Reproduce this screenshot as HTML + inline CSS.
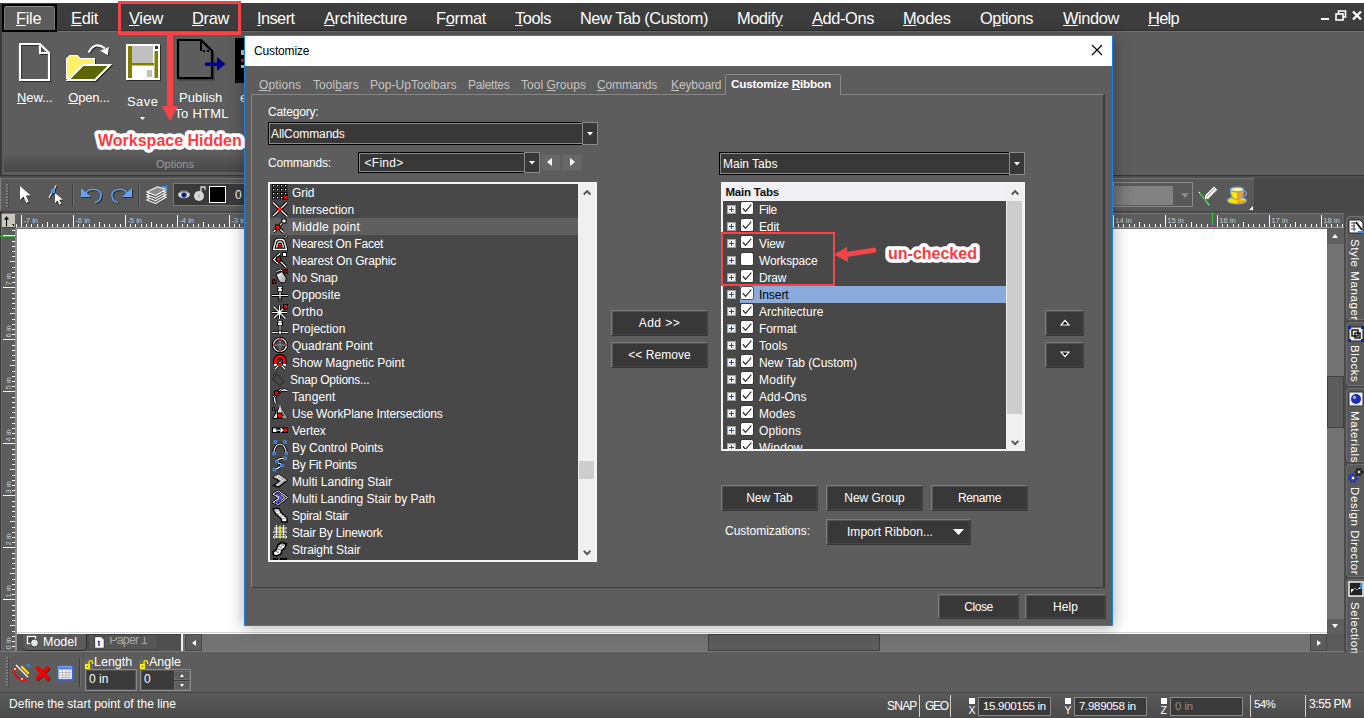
<!DOCTYPE html><html><head><meta charset="utf-8"><title>Customize</title><style>
*{box-sizing:border-box;margin:0;padding:0}
html,body{width:1364px;height:718px;overflow:hidden}
body{position:relative;background:#484848;font-family:"Liberation Sans",sans-serif;color:#fff;font-size:12px}
.a{position:absolute}
.t{position:absolute;white-space:pre;line-height:1}
u{text-decoration:underline;text-underline-offset:1px}
.btn{position:absolute;background:#383838;border:1px solid #707070;box-shadow:inset 0 0 0 1px #444;color:#fff;text-align:center;white-space:pre}
.d{font-size:11.6px}
</style></head><body>
<div class="a" style="left:0px;top:0px;width:1364px;height:3px;background:#fff;"></div>
<div class="a" style="left:0px;top:3px;width:1364px;height:27px;background:#3d3d3d;"></div>
<div class="a" style="left:0px;top:3px;width:2px;height:715px;background:#3a3a3a;"></div>
<div class="a" style="left:1321px;top:18px;width:8px;height:2px;background:#fff;"></div>
<svg class="a" style="left:1335px;top:10px" width="12" height="11" viewBox="0 0 12 11"><path d="M3.5 3.5V1h7v6H8" fill="none" stroke="#fff" stroke-width="1.6"/><rect x="1" y="4" width="7" height="6" fill="none" stroke="#fff" stroke-width="1.6"/></svg>
<svg class="a" style="left:1352px;top:10px" width="10" height="11" viewBox="0 0 10 11"><path d="M1 1.5l8 8M9 1.5l-8 8" stroke="#fff" stroke-width="2.4"/></svg>
<div class="a" style="left:2px;top:30px;width:1362px;height:146px;background:#5d5d5d;border-top:1px solid #2f2f2f;border-bottom:1px solid #363636"></div>
<div class="a" style="left:0px;top:176px;width:1364px;height:2px;background:#4e4e4e;"></div>
<div class="a" style="left:2px;top:31px;width:1362px;height:1px;background:#707070;"></div>
<div class="a" style="left:2px;top:4px;width:55px;height:27.5px;background:#000;"></div>
<div class="a" style="left:4px;top:6px;width:51px;height:23.5px;background:#5c5c5c;border:1px solid;border-color:#8c8c8c #7c7c7c #5c5c5c #7c7c7c;border-radius:3px 3px 0 0"></div>
<div class="t " style="left:16px;top:10.12px;font-size:16.4px;color:#fff;letter-spacing:-0.282px;"><u>F</u>ile</div>
<div class="t " style="left:71px;top:10.12px;font-size:16.4px;color:#fff;letter-spacing:-0.315px;"><u>E</u>dit</div>
<div class="t " style="left:129px;top:10.12px;font-size:16.4px;color:#fff;letter-spacing:-0.313px;"><u>V</u>iew</div>
<div class="t " style="left:192px;top:10.12px;font-size:16.4px;color:#fff;letter-spacing:-0.318px;"><u>D</u>raw</div>
<div class="t " style="left:257px;top:10.12px;font-size:16.4px;color:#fff;letter-spacing:-0.586px;"><u>I</u>nsert</div>
<div class="t " style="left:324px;top:10.12px;font-size:16.4px;color:#fff;letter-spacing:-0.375px;"><u>A</u>rchitecture</div>
<div class="t " style="left:436px;top:10.12px;font-size:16.4px;color:#fff;letter-spacing:-0.323px;">F<u>o</u>rmat</div>
<div class="t " style="left:515px;top:10.12px;font-size:16.4px;color:#fff;letter-spacing:-0.457px;"><u>T</u>ools</div>
<div class="t " style="left:580px;top:10.12px;font-size:16.4px;color:#fff;letter-spacing:-0.469px;">New Tab (Custom)</div>
<div class="t " style="left:737px;top:10.12px;font-size:16.4px;color:#fff;letter-spacing:-0.467px;">Modif<u>y</u></div>
<div class="t " style="left:812px;top:10.12px;font-size:16.4px;color:#fff;letter-spacing:-0.389px;"><u>A</u>dd-Ons</div>
<div class="t " style="left:903px;top:10.12px;font-size:16.4px;color:#fff;letter-spacing:-0.325px;"><u>M</u>odes</div>
<div class="t " style="left:980px;top:10.12px;font-size:16.4px;color:#fff;letter-spacing:-0.503px;">O<u>p</u>tions</div>
<div class="t " style="left:1063px;top:10.12px;font-size:16.4px;color:#fff;letter-spacing:-0.388px;"><u>W</u>indow</div>
<div class="t " style="left:1148px;top:10.12px;font-size:16.4px;color:#fff;letter-spacing:-0.683px;"><u>H</u>elp</div>
<div class="a" style="left:4px;top:156px;width:240px;height:16px;background:linear-gradient(#585858,#484848);"></div>
<div class="t " style="left:156px;top:159.29px;font-size:11px;color:#9b9b9b;">Options</div>
<div class="t " style="left:17px;top:91.00px;font-size:13px;color:#fff;letter-spacing:-0.104px;"><u>N</u>ew...</div>
<div class="t " style="left:68.3px;top:91.00px;font-size:13px;color:#fff;letter-spacing:-0.191px;"><u>O</u>pen...</div>
<div class="t " style="left:127px;top:94.50px;font-size:13px;color:#fff;letter-spacing:0.417px;">Save</div>
<div class="t " style="left:179px;top:91.00px;font-size:13px;color:#fff;letter-spacing:0.094px;">Publish</div>
<div class="t " style="left:174.4px;top:107.00px;font-size:13px;color:#fff;letter-spacing:0.224px;">To HTML</div>
<div class="t " style="left:240px;top:91.00px;font-size:13px;color:#fff;">e</div>
<svg class="a" style="left:140px;top:116.500px" width="5" height="3"><path d="M0 0h5L2.500 3z" fill="#fff"/></svg>
<div class="a" style="left:0px;top:178px;width:1254px;height:33px;background:#595959;border-top:1px solid #747474;border-left:1px solid #808080"></div>
<div class="a" style="left:17px;top:229px;width:1310px;height:405px;background:#fff;"></div>
<div class="a" style="left:17px;top:632px;width:1310px;height:1px;background:#d4d4d4;"></div>
<div class="a" style="left:1327px;top:228px;width:17px;height:406px;background:#737373;"></div>
<div class="a" style="left:1344px;top:214px;width:20px;height:438px;background:#4a4a4a;"></div>
<div class="a" style="left:2px;top:634px;width:1342px;height:17px;background:#737373;"></div>
<div class="a" style="left:0px;top:651px;width:1364px;height:1px;background:#7a7a7a;"></div>
<div class="a" style="left:0px;top:652px;width:1364px;height:40px;background:#5d5d5d;"></div>
<div class="a" style="left:0px;top:692px;width:1364px;height:26px;background:linear-gradient(#5a5a5a,#4a4a4a);border-top:1px solid #464646"></div>
<div class="t " style="left:9px;top:698.24px;font-size:12px;color:#fff;letter-spacing:0.026px;">Define the start point of the line</div>
<svg class="a" style="left:17px;top:41px;filter:drop-shadow(1px 1px 0.6px rgba(0,0,0,.55))" width="38" height="44" viewBox="0 0 38 44"><path d="M3 3h20l9 9v27H3z" fill="none" stroke="#fff" stroke-width="2.2"/><path d="M23 3v9h9" fill="none" stroke="#fff" stroke-width="2.2"/></svg>
<svg class="a" style="left:64px;top:40px;filter:drop-shadow(1px 1px 0.6px rgba(0,0,0,.55))" width="50" height="44" viewBox="0 0 50 44"><path d="M24.500 12.600Q31 .500 41 8.500" fill="none" stroke="#fff" stroke-width="2.200"/><path d="M36.200 10.700L45 7L43.700 15.300z" fill="#fff"/>
<path d="M3 39V19l3-3h7l3 3h14v7" fill="#fff066" stroke="#fff" stroke-width="2"/><path d="M3 39V19l3-3h7l3 3h14v6H19z" fill="#fff066"/>
<path d="M4 40l15-15h27L31 40z" fill="#5c6600" stroke="#fff" stroke-width="2"/></svg>
<svg class="a" style="left:124px;top:42px;filter:drop-shadow(1px 1px 0.6px rgba(0,0,0,.55))" width="40" height="42" viewBox="0 0 40 42"><path d="M2 2h34v36H2z" fill="#fff"/><rect x="4" y="4" width="4" height="32" fill="#7f7f00"/><rect x="30.500" y="9" width="3.500" height="27" fill="#7f7f00"/>
<rect x="8" y="4" width="21" height="17" fill="#c0c0c0"/><rect x="8" y="21" width="22" height="2.500" fill="#7f7f00"/>
<rect x="8" y="24" width="22" height="10" fill="#fff"/><rect x="23" y="28" width="5" height="7" fill="#c0c0c0"/><rect x="31" y="4" width="3" height="3" fill="#333"/></svg>
<svg class="a" style="left:175px;top:37px;" width="54" height="50" viewBox="0 0 54 50"><path d="M4.500 4.500h23l11 11v27h-34z" fill="none" stroke="#3a3a3a" stroke-width="2"/><path d="M3 3h23l11 11v27H3z" fill="#5d5d5d" stroke="#000" stroke-width="2.200"/><path d="M26 3v11h11" fill="none" stroke="#000" stroke-width="2" stroke-dasharray="11 2 2 2 2 2 2 2"/>
<rect x="30" y="25.500" width="14" height="3.400" fill="#00008b"/><path d="M42 20l8.500 7-8.500 7z" fill="#00008b"/></svg>
<div class="a" style="left:235px;top:38px;width:9px;height:45px;background:#000;"></div>
<div class="a" style="left:241px;top:50px;width:3px;height:5px;background:#c0c0c0;"></div>
<div class="a" style="left:241px;top:59px;width:3px;height:3px;background:#f00;"></div>
<div class="a" style="left:241px;top:65px;width:3px;height:3px;background:#c0c0c0;"></div>
<div class="a" style="left:6px;top:184px;width:2px;height:2px;background:#808080;box-shadow:1px 1px 0 #444"></div>
<div class="a" style="left:6px;top:187px;width:2px;height:2px;background:#808080;box-shadow:1px 1px 0 #444"></div>
<div class="a" style="left:6px;top:190px;width:2px;height:2px;background:#808080;box-shadow:1px 1px 0 #444"></div>
<div class="a" style="left:6px;top:193px;width:2px;height:2px;background:#808080;box-shadow:1px 1px 0 #444"></div>
<div class="a" style="left:6px;top:196px;width:2px;height:2px;background:#808080;box-shadow:1px 1px 0 #444"></div>
<div class="a" style="left:6px;top:199px;width:2px;height:2px;background:#808080;box-shadow:1px 1px 0 #444"></div>
<div class="a" style="left:6px;top:202px;width:2px;height:2px;background:#808080;box-shadow:1px 1px 0 #444"></div>
<div class="a" style="left:6px;top:205px;width:2px;height:2px;background:#808080;box-shadow:1px 1px 0 #444"></div>
<svg class="a" style="left:17px;top:184px;filter:drop-shadow(1px 1px 0.6px rgba(0,0,0,.55))" width="16" height="22" viewBox="0 0 16 22"><path d="M3 2v14l3.600-3.600 2.800 6.400 2.300-1-2.800-6.300h4.800z" fill="#fff"/></svg>
<svg class="a" style="left:46px;top:184px;filter:drop-shadow(1px 1px 0.6px rgba(0,0,0,.55))" width="18" height="22" viewBox="0 0 18 22"><path d="M10 1C9 6 5 8 3 14" fill="none" stroke="#ddd" stroke-width="1.200"/><rect x="5" y="5" width="4" height="4" fill="#4d94f5"/><path d="M9 9v10l2.500-2.500 2 4 1.800-.800-2-4h3.500z" fill="#fff"/></svg>
<div class="a" style="left:72px;top:184px;width:1px;height:23px;background:#3e3e3e;"></div>
<div class="a" style="left:73px;top:184px;width:1px;height:23px;background:#6c6c6c;"></div>
<svg class="a" style="left:79px;top:185px;filter:drop-shadow(1px 1px 0.6px rgba(0,0,0,.55))" width="26" height="20" viewBox="0 0 26 20"><path d="M2 3v9h10z" fill="#66a3f7"/><path d="M7 8c4-6 16-4 15 3-.500 4-3 6-6 6.500" fill="none" stroke="#66a3f7" stroke-width="1.400"/></svg>
<svg class="a" style="left:108px;top:185px;filter:drop-shadow(1px 1px 0.6px rgba(0,0,0,.55))" width="26" height="20" viewBox="0 0 26 20"><path d="M24 3v9h-10z" fill="#66a3f7"/><path d="M19 8c-4-6-16-4-15 3 .500 4 3 6 6 6.500" fill="none" stroke="#66a3f7" stroke-width="1.400"/></svg>
<div class="a" style="left:138px;top:184px;width:1px;height:23px;background:#3e3e3e;"></div>
<div class="a" style="left:139px;top:184px;width:1px;height:23px;background:#6c6c6c;"></div>
<svg class="a" style="left:145px;top:184.5px;" width="23" height="21" viewBox="0 0 26 24"><path d="M2 17l12-6 10 3-12 7z" fill="#5d5d5d" stroke="#fff" stroke-width="1.200"/><path d="M2 14l12-6 10 3-12 7z" fill="#5d5d5d" stroke="#fff" stroke-width="1.200"/><path d="M2 11l12-6 10 3-12 7z" fill="#5d5d5d" stroke="#fff" stroke-width="1.200"/>
<path d="M2 8l12-6 10 3-12 7z" fill="#8a8a8a" stroke="#fff" stroke-width="1.200"/><path d="M19 2h5v6" fill="none" stroke="#4d94f5" stroke-width="2"/></svg>
<div class="a" style="left:173px;top:183px;width:80px;height:23px;background:#3a3a3a;border:1px solid #7a7a7a"></div>
<svg class="a" style="left:176.5px;top:189px;" width="14" height="12" viewBox="0 0 16 14"><path d="M1 7c3-5 11-5 14 0-3 5-11 5-14 0z" fill="#e8e8e8"/><circle cx="8" cy="7" r="3.200" fill="#1c3f9e"/><circle cx="8" cy="7" r="1.400" fill="#0a1030"/><path d="M1 6c3-5 11-5 14 0" fill="none" stroke="#bbb" stroke-width="1"/></svg>
<svg class="a" style="left:193px;top:185px;" width="14" height="18" viewBox="0 0 14 18"><circle cx="6" cy="11" r="5" fill="#d9d9d9"/><path d="M8 7V2h4v3" fill="none" stroke="#d9d9d9" stroke-width="1.300"/><rect x="5" y="9" width="2" height="4" fill="#bbb"/></svg>
<div class="a" style="left:209px;top:186px;width:17px;height:17px;background:#000;border:1px solid #fff"></div>
<div class="t " style="left:235px;top:188.84px;font-size:12px;color:#fff;">0</div>
<div class="a" style="left:1113px;top:182px;width:80px;height:25px;background:#595959;border:1px solid #8a8a8a"></div>
<div class="a" style="left:1113px;top:186px;width:60px;height:19px;background:linear-gradient(90deg,#747474,#828282 40%);"></div>
<svg class="a" style="left:1181px;top:193px" width="8" height="5"><path d="M0 0h8L4 5z" fill="#8a8a8a"/></svg>
<svg class="a" style="left:1198px;top:184px;" width="22" height="22" viewBox="0 0 22 22"><path d="M1 8l10 13" stroke="#fff" stroke-width="1.200"/><path d="M2 9l9 11" stroke="#18c018" stroke-width="1.400"/><path d="M7 11l9-9 4 4-9 9-5 1z" fill="#f4f4f4" stroke="#555" stroke-width=".800"/><path d="M9 12l8-8M11 14l8-8" stroke="#777" stroke-width=".800"/></svg>
<svg class="a" style="left:1227px;top:185px;" width="23" height="20" viewBox="0 0 23 20"><ellipse cx="10" cy="15.500" rx="9.500" ry="3.500" fill="#ffe000" stroke="#6fa0f0" stroke-width="1.200"/><path d="M10 19a9.500 3.500 0 0 0 9.500-3.500H10z" fill="#e8a030"/>
<path d="M3.500 5c0 6 2 9.500 6.500 9.500S16.500 11 16.500 5z" fill="#ffe800" stroke="#6fa0f0" stroke-width="1.200"/><path d="M10 14.500c4.500 0 6.500-3.500 6.500-9.500H10z" fill="#e8a030"/>
<ellipse cx="10" cy="4.500" rx="6.500" ry="2.300" fill="#fff6a0" stroke="#6fa0f0" stroke-width="1.200"/><path d="M16.500 6.500c4-1 4 4-1 5" fill="none" stroke="#6fa0f0" stroke-width="1.400"/></svg>
<svg class="a" style="left:1249px;top:206px" width="4" height="4"><path d="M4 0v4H0z" fill="#fff"/></svg>
<div class="a" style="left:2px;top:213px;width:1342px;height:1px;background:#767676;"></div>
<div class="a" style="left:2px;top:214px;width:1342px;height:13px;background:#5d5d5d;"></div>
<div class="a" style="left:16px;top:227px;width:1328px;height:1px;background:#9a9a9a;"></div>
<div class="a" style="left:16px;top:228px;width:1328px;height:1px;background:#6e6e6e;"></div>
<svg class="a" style="left:0;top:214px" width="1344" height="14" viewBox="0 0 1344 14"><rect x="16" y="10" width="1" height="3" fill="#fff"/><rect x="21" y="1" width="1" height="12" fill="#fff"/><text x="23.2" y="8.900" font-size="7.700" fill="#c4ccd4" font-family="Liberation Sans">-7 in</text><rect x="26" y="10" width="1" height="3" fill="#fff"/><rect x="31" y="10" width="1" height="3" fill="#fff"/><rect x="37" y="10" width="1" height="3" fill="#fff"/><rect x="42" y="10" width="1" height="3" fill="#fff"/><rect x="47" y="8" width="1" height="5" fill="#fff"/><rect x="52" y="10" width="1" height="3" fill="#fff"/><rect x="57" y="10" width="1" height="3" fill="#fff"/><rect x="63" y="10" width="1" height="3" fill="#fff"/><rect x="68" y="10" width="1" height="3" fill="#fff"/><rect x="73" y="1" width="1" height="12" fill="#fff"/><text x="75.2" y="8.900" font-size="7.700" fill="#c4ccd4" font-family="Liberation Sans">-6 in</text><rect x="78" y="10" width="1" height="3" fill="#fff"/><rect x="83" y="10" width="1" height="3" fill="#fff"/><rect x="89" y="10" width="1" height="3" fill="#fff"/><rect x="94" y="10" width="1" height="3" fill="#fff"/><rect x="99" y="8" width="1" height="5" fill="#fff"/><rect x="104" y="10" width="1" height="3" fill="#fff"/><rect x="109" y="10" width="1" height="3" fill="#fff"/><rect x="115" y="10" width="1" height="3" fill="#fff"/><rect x="120" y="10" width="1" height="3" fill="#fff"/><rect x="125" y="1" width="1" height="12" fill="#fff"/><text x="127.2" y="8.900" font-size="7.700" fill="#c4ccd4" font-family="Liberation Sans">-5 in</text><rect x="130" y="10" width="1" height="3" fill="#fff"/><rect x="135" y="10" width="1" height="3" fill="#fff"/><rect x="141" y="10" width="1" height="3" fill="#fff"/><rect x="146" y="10" width="1" height="3" fill="#fff"/><rect x="151" y="8" width="1" height="5" fill="#fff"/><rect x="156" y="10" width="1" height="3" fill="#fff"/><rect x="161" y="10" width="1" height="3" fill="#fff"/><rect x="167" y="10" width="1" height="3" fill="#fff"/><rect x="172" y="10" width="1" height="3" fill="#fff"/><rect x="177" y="1" width="1" height="12" fill="#fff"/><text x="179.2" y="8.900" font-size="7.700" fill="#c4ccd4" font-family="Liberation Sans">-4 in</text><rect x="182" y="10" width="1" height="3" fill="#fff"/><rect x="187" y="10" width="1" height="3" fill="#fff"/><rect x="193" y="10" width="1" height="3" fill="#fff"/><rect x="198" y="10" width="1" height="3" fill="#fff"/><rect x="203" y="8" width="1" height="5" fill="#fff"/><rect x="208" y="10" width="1" height="3" fill="#fff"/><rect x="213" y="10" width="1" height="3" fill="#fff"/><rect x="219" y="10" width="1" height="3" fill="#fff"/><rect x="224" y="10" width="1" height="3" fill="#fff"/><rect x="229" y="1" width="1" height="12" fill="#fff"/><text x="231.2" y="8.900" font-size="7.700" fill="#c4ccd4" font-family="Liberation Sans">-3 in</text><rect x="234" y="10" width="1" height="3" fill="#fff"/><rect x="239" y="10" width="1" height="3" fill="#fff"/><rect x="245" y="10" width="1" height="3" fill="#fff"/><rect x="250" y="10" width="1" height="3" fill="#fff"/><rect x="255" y="8" width="1" height="5" fill="#fff"/><rect x="260" y="10" width="1" height="3" fill="#fff"/><rect x="265" y="10" width="1" height="3" fill="#fff"/><rect x="271" y="10" width="1" height="3" fill="#fff"/><rect x="276" y="10" width="1" height="3" fill="#fff"/><rect x="281" y="1" width="1" height="12" fill="#fff"/><text x="283.2" y="8.900" font-size="7.700" fill="#c4ccd4" font-family="Liberation Sans">-2 in</text><rect x="286" y="10" width="1" height="3" fill="#fff"/><rect x="291" y="10" width="1" height="3" fill="#fff"/><rect x="297" y="10" width="1" height="3" fill="#fff"/><rect x="302" y="10" width="1" height="3" fill="#fff"/><rect x="307" y="8" width="1" height="5" fill="#fff"/><rect x="312" y="10" width="1" height="3" fill="#fff"/><rect x="317" y="10" width="1" height="3" fill="#fff"/><rect x="323" y="10" width="1" height="3" fill="#fff"/><rect x="328" y="10" width="1" height="3" fill="#fff"/><rect x="333" y="1" width="1" height="12" fill="#fff"/><text x="335.2" y="8.900" font-size="7.700" fill="#c4ccd4" font-family="Liberation Sans">-1 in</text><rect x="338" y="10" width="1" height="3" fill="#fff"/><rect x="343" y="10" width="1" height="3" fill="#fff"/><rect x="349" y="10" width="1" height="3" fill="#fff"/><rect x="354" y="10" width="1" height="3" fill="#fff"/><rect x="359" y="8" width="1" height="5" fill="#fff"/><rect x="364" y="10" width="1" height="3" fill="#fff"/><rect x="369" y="10" width="1" height="3" fill="#fff"/><rect x="375" y="10" width="1" height="3" fill="#fff"/><rect x="380" y="10" width="1" height="3" fill="#fff"/><rect x="385" y="1" width="1" height="12" fill="#fff"/><text x="387.2" y="8.900" font-size="7.700" fill="#c4ccd4" font-family="Liberation Sans">0 in</text><rect x="390" y="10" width="1" height="3" fill="#fff"/><rect x="395" y="10" width="1" height="3" fill="#fff"/><rect x="401" y="10" width="1" height="3" fill="#fff"/><rect x="406" y="10" width="1" height="3" fill="#fff"/><rect x="411" y="8" width="1" height="5" fill="#fff"/><rect x="416" y="10" width="1" height="3" fill="#fff"/><rect x="421" y="10" width="1" height="3" fill="#fff"/><rect x="427" y="10" width="1" height="3" fill="#fff"/><rect x="432" y="10" width="1" height="3" fill="#fff"/><rect x="437" y="1" width="1" height="12" fill="#fff"/><text x="439.2" y="8.900" font-size="7.700" fill="#c4ccd4" font-family="Liberation Sans">1 in</text><rect x="442" y="10" width="1" height="3" fill="#fff"/><rect x="447" y="10" width="1" height="3" fill="#fff"/><rect x="453" y="10" width="1" height="3" fill="#fff"/><rect x="458" y="10" width="1" height="3" fill="#fff"/><rect x="463" y="8" width="1" height="5" fill="#fff"/><rect x="468" y="10" width="1" height="3" fill="#fff"/><rect x="473" y="10" width="1" height="3" fill="#fff"/><rect x="479" y="10" width="1" height="3" fill="#fff"/><rect x="484" y="10" width="1" height="3" fill="#fff"/><rect x="489" y="1" width="1" height="12" fill="#fff"/><text x="491.2" y="8.900" font-size="7.700" fill="#c4ccd4" font-family="Liberation Sans">2 in</text><rect x="494" y="10" width="1" height="3" fill="#fff"/><rect x="499" y="10" width="1" height="3" fill="#fff"/><rect x="505" y="10" width="1" height="3" fill="#fff"/><rect x="510" y="10" width="1" height="3" fill="#fff"/><rect x="515" y="8" width="1" height="5" fill="#fff"/><rect x="520" y="10" width="1" height="3" fill="#fff"/><rect x="525" y="10" width="1" height="3" fill="#fff"/><rect x="531" y="10" width="1" height="3" fill="#fff"/><rect x="536" y="10" width="1" height="3" fill="#fff"/><rect x="541" y="1" width="1" height="12" fill="#fff"/><text x="543.2" y="8.900" font-size="7.700" fill="#c4ccd4" font-family="Liberation Sans">3 in</text><rect x="546" y="10" width="1" height="3" fill="#fff"/><rect x="551" y="10" width="1" height="3" fill="#fff"/><rect x="557" y="10" width="1" height="3" fill="#fff"/><rect x="562" y="10" width="1" height="3" fill="#fff"/><rect x="567" y="8" width="1" height="5" fill="#fff"/><rect x="572" y="10" width="1" height="3" fill="#fff"/><rect x="577" y="10" width="1" height="3" fill="#fff"/><rect x="583" y="10" width="1" height="3" fill="#fff"/><rect x="588" y="10" width="1" height="3" fill="#fff"/><rect x="593" y="1" width="1" height="12" fill="#fff"/><text x="595.2" y="8.900" font-size="7.700" fill="#c4ccd4" font-family="Liberation Sans">4 in</text><rect x="598" y="10" width="1" height="3" fill="#fff"/><rect x="603" y="10" width="1" height="3" fill="#fff"/><rect x="609" y="10" width="1" height="3" fill="#fff"/><rect x="614" y="10" width="1" height="3" fill="#fff"/><rect x="619" y="8" width="1" height="5" fill="#fff"/><rect x="624" y="10" width="1" height="3" fill="#fff"/><rect x="629" y="10" width="1" height="3" fill="#fff"/><rect x="635" y="10" width="1" height="3" fill="#fff"/><rect x="640" y="10" width="1" height="3" fill="#fff"/><rect x="645" y="1" width="1" height="12" fill="#fff"/><text x="647.2" y="8.900" font-size="7.700" fill="#c4ccd4" font-family="Liberation Sans">5 in</text><rect x="650" y="10" width="1" height="3" fill="#fff"/><rect x="655" y="10" width="1" height="3" fill="#fff"/><rect x="661" y="10" width="1" height="3" fill="#fff"/><rect x="666" y="10" width="1" height="3" fill="#fff"/><rect x="671" y="8" width="1" height="5" fill="#fff"/><rect x="676" y="10" width="1" height="3" fill="#fff"/><rect x="681" y="10" width="1" height="3" fill="#fff"/><rect x="687" y="10" width="1" height="3" fill="#fff"/><rect x="692" y="10" width="1" height="3" fill="#fff"/><rect x="697" y="1" width="1" height="12" fill="#fff"/><text x="699.2" y="8.900" font-size="7.700" fill="#c4ccd4" font-family="Liberation Sans">6 in</text><rect x="702" y="10" width="1" height="3" fill="#fff"/><rect x="707" y="10" width="1" height="3" fill="#fff"/><rect x="713" y="10" width="1" height="3" fill="#fff"/><rect x="718" y="10" width="1" height="3" fill="#fff"/><rect x="723" y="8" width="1" height="5" fill="#fff"/><rect x="728" y="10" width="1" height="3" fill="#fff"/><rect x="733" y="10" width="1" height="3" fill="#fff"/><rect x="739" y="10" width="1" height="3" fill="#fff"/><rect x="744" y="10" width="1" height="3" fill="#fff"/><rect x="749" y="1" width="1" height="12" fill="#fff"/><text x="751.2" y="8.900" font-size="7.700" fill="#c4ccd4" font-family="Liberation Sans">7 in</text><rect x="754" y="10" width="1" height="3" fill="#fff"/><rect x="759" y="10" width="1" height="3" fill="#fff"/><rect x="765" y="10" width="1" height="3" fill="#fff"/><rect x="770" y="10" width="1" height="3" fill="#fff"/><rect x="775" y="8" width="1" height="5" fill="#fff"/><rect x="780" y="10" width="1" height="3" fill="#fff"/><rect x="785" y="10" width="1" height="3" fill="#fff"/><rect x="791" y="10" width="1" height="3" fill="#fff"/><rect x="796" y="10" width="1" height="3" fill="#fff"/><rect x="801" y="1" width="1" height="12" fill="#fff"/><text x="803.2" y="8.900" font-size="7.700" fill="#c4ccd4" font-family="Liberation Sans">8 in</text><rect x="806" y="10" width="1" height="3" fill="#fff"/><rect x="811" y="10" width="1" height="3" fill="#fff"/><rect x="817" y="10" width="1" height="3" fill="#fff"/><rect x="822" y="10" width="1" height="3" fill="#fff"/><rect x="827" y="8" width="1" height="5" fill="#fff"/><rect x="832" y="10" width="1" height="3" fill="#fff"/><rect x="837" y="10" width="1" height="3" fill="#fff"/><rect x="843" y="10" width="1" height="3" fill="#fff"/><rect x="848" y="10" width="1" height="3" fill="#fff"/><rect x="853" y="1" width="1" height="12" fill="#fff"/><text x="855.2" y="8.900" font-size="7.700" fill="#c4ccd4" font-family="Liberation Sans">9 in</text><rect x="858" y="10" width="1" height="3" fill="#fff"/><rect x="863" y="10" width="1" height="3" fill="#fff"/><rect x="869" y="10" width="1" height="3" fill="#fff"/><rect x="874" y="10" width="1" height="3" fill="#fff"/><rect x="879" y="8" width="1" height="5" fill="#fff"/><rect x="884" y="10" width="1" height="3" fill="#fff"/><rect x="889" y="10" width="1" height="3" fill="#fff"/><rect x="895" y="10" width="1" height="3" fill="#fff"/><rect x="900" y="10" width="1" height="3" fill="#fff"/><rect x="905" y="1" width="1" height="12" fill="#fff"/><text x="907.2" y="8.900" font-size="7.700" fill="#c4ccd4" font-family="Liberation Sans">10 in</text><rect x="910" y="10" width="1" height="3" fill="#fff"/><rect x="915" y="10" width="1" height="3" fill="#fff"/><rect x="921" y="10" width="1" height="3" fill="#fff"/><rect x="926" y="10" width="1" height="3" fill="#fff"/><rect x="931" y="8" width="1" height="5" fill="#fff"/><rect x="936" y="10" width="1" height="3" fill="#fff"/><rect x="941" y="10" width="1" height="3" fill="#fff"/><rect x="947" y="10" width="1" height="3" fill="#fff"/><rect x="952" y="10" width="1" height="3" fill="#fff"/><rect x="957" y="1" width="1" height="12" fill="#fff"/><text x="959.2" y="8.900" font-size="7.700" fill="#c4ccd4" font-family="Liberation Sans">11 in</text><rect x="962" y="10" width="1" height="3" fill="#fff"/><rect x="967" y="10" width="1" height="3" fill="#fff"/><rect x="973" y="10" width="1" height="3" fill="#fff"/><rect x="978" y="10" width="1" height="3" fill="#fff"/><rect x="983" y="8" width="1" height="5" fill="#fff"/><rect x="988" y="10" width="1" height="3" fill="#fff"/><rect x="993" y="10" width="1" height="3" fill="#fff"/><rect x="999" y="10" width="1" height="3" fill="#fff"/><rect x="1004" y="10" width="1" height="3" fill="#fff"/><rect x="1009" y="1" width="1" height="12" fill="#fff"/><text x="1011.2" y="8.900" font-size="7.700" fill="#c4ccd4" font-family="Liberation Sans">12 in</text><rect x="1014" y="10" width="1" height="3" fill="#fff"/><rect x="1019" y="10" width="1" height="3" fill="#fff"/><rect x="1025" y="10" width="1" height="3" fill="#fff"/><rect x="1030" y="10" width="1" height="3" fill="#fff"/><rect x="1035" y="8" width="1" height="5" fill="#fff"/><rect x="1040" y="10" width="1" height="3" fill="#fff"/><rect x="1045" y="10" width="1" height="3" fill="#fff"/><rect x="1051" y="10" width="1" height="3" fill="#fff"/><rect x="1056" y="10" width="1" height="3" fill="#fff"/><rect x="1061" y="1" width="1" height="12" fill="#fff"/><text x="1063.2" y="8.900" font-size="7.700" fill="#c4ccd4" font-family="Liberation Sans">13 in</text><rect x="1066" y="10" width="1" height="3" fill="#fff"/><rect x="1071" y="10" width="1" height="3" fill="#fff"/><rect x="1077" y="10" width="1" height="3" fill="#fff"/><rect x="1082" y="10" width="1" height="3" fill="#fff"/><rect x="1087" y="8" width="1" height="5" fill="#fff"/><rect x="1092" y="10" width="1" height="3" fill="#fff"/><rect x="1097" y="10" width="1" height="3" fill="#fff"/><rect x="1103" y="10" width="1" height="3" fill="#fff"/><rect x="1108" y="10" width="1" height="3" fill="#fff"/><rect x="1113" y="1" width="1" height="12" fill="#fff"/><text x="1115.2" y="8.900" font-size="7.700" fill="#c4ccd4" font-family="Liberation Sans">14 in</text><rect x="1118" y="10" width="1" height="3" fill="#fff"/><rect x="1123" y="10" width="1" height="3" fill="#fff"/><rect x="1129" y="10" width="1" height="3" fill="#fff"/><rect x="1134" y="10" width="1" height="3" fill="#fff"/><rect x="1139" y="8" width="1" height="5" fill="#fff"/><rect x="1144" y="10" width="1" height="3" fill="#fff"/><rect x="1149" y="10" width="1" height="3" fill="#fff"/><rect x="1155" y="10" width="1" height="3" fill="#fff"/><rect x="1160" y="10" width="1" height="3" fill="#fff"/><rect x="1165" y="1" width="1" height="12" fill="#fff"/><text x="1167.2" y="8.900" font-size="7.700" fill="#c4ccd4" font-family="Liberation Sans">15 in</text><rect x="1170" y="10" width="1" height="3" fill="#fff"/><rect x="1175" y="10" width="1" height="3" fill="#fff"/><rect x="1181" y="10" width="1" height="3" fill="#fff"/><rect x="1186" y="10" width="1" height="3" fill="#fff"/><rect x="1191" y="8" width="1" height="5" fill="#fff"/><rect x="1196" y="10" width="1" height="3" fill="#fff"/><rect x="1201" y="10" width="1" height="3" fill="#fff"/><rect x="1207" y="10" width="1" height="3" fill="#fff"/><rect x="1212" y="10" width="1" height="3" fill="#fff"/><rect x="1217" y="1" width="1" height="12" fill="#fff"/><text x="1219.2" y="8.900" font-size="7.700" fill="#c4ccd4" font-family="Liberation Sans">16 in</text><rect x="1222" y="10" width="1" height="3" fill="#fff"/><rect x="1227" y="10" width="1" height="3" fill="#fff"/><rect x="1233" y="10" width="1" height="3" fill="#fff"/><rect x="1238" y="10" width="1" height="3" fill="#fff"/><rect x="1243" y="8" width="1" height="5" fill="#fff"/><rect x="1248" y="10" width="1" height="3" fill="#fff"/><rect x="1253" y="10" width="1" height="3" fill="#fff"/><rect x="1259" y="10" width="1" height="3" fill="#fff"/><rect x="1264" y="10" width="1" height="3" fill="#fff"/><rect x="1269" y="1" width="1" height="12" fill="#fff"/><text x="1271.2" y="8.900" font-size="7.700" fill="#c4ccd4" font-family="Liberation Sans">17 in</text><rect x="1274" y="10" width="1" height="3" fill="#fff"/><rect x="1279" y="10" width="1" height="3" fill="#fff"/><rect x="1285" y="10" width="1" height="3" fill="#fff"/><rect x="1290" y="10" width="1" height="3" fill="#fff"/><rect x="1295" y="8" width="1" height="5" fill="#fff"/><rect x="1300" y="10" width="1" height="3" fill="#fff"/><rect x="1305" y="10" width="1" height="3" fill="#fff"/><rect x="1311" y="10" width="1" height="3" fill="#fff"/><rect x="1316" y="10" width="1" height="3" fill="#fff"/><rect x="1321" y="1" width="1" height="12" fill="#fff"/><text x="1323.2" y="8.900" font-size="7.700" fill="#c4ccd4" font-family="Liberation Sans">18 in</text><rect x="1326" y="10" width="1" height="3" fill="#fff"/><rect x="1331" y="10" width="1" height="3" fill="#fff"/><rect x="1337" y="10" width="1" height="3" fill="#fff"/><rect x="1342" y="10" width="1" height="3" fill="#fff"/></svg>
<div class="a" style="left:2px;top:214px;width:13px;height:13px;background:#c9c9bb;"></div>
<svg class="a" style="left:2px;top:214px" width="14" height="14"><path d="M4.500 2.500v10" stroke="#000" stroke-width="1.100"/><path d="M2.500 5h1.500M5 5h1.500" stroke="#000" stroke-width="1.600"/><path d="M3.500 3.500h2" stroke="#000" stroke-width="1"/><path d="M10.500 10.500l1.500 1.500v-1.500z" fill="#000" stroke="#000" stroke-width=".600"/></svg>
<div class="a" style="left:1212px;top:212px;width:1px;height:14px;background:#3fbf3f;"></div>
<div class="a" style="left:1212px;top:225px;width:1px;height:2px;background:#f0f;"></div>
<div class="a" style="left:2px;top:228px;width:13px;height:423px;background:#5d5d5d;"></div>
<div class="a" style="left:15px;top:228px;width:2px;height:423px;background:#8e8e8e;"></div>
<div class="a" style="left:1px;top:214px;width:1px;height:438px;background:#6e6e6e;"></div>
<svg class="a" style="left:2px;top:228px" width="14" height="423" viewBox="0 0 14 423"><rect x="10" y="2" width="3" height="1" fill="#fff"/><rect x="1" y="7" width="12" height="1" fill="#fff"/><rect x="10" y="13" width="3" height="1" fill="#fff"/><rect x="10" y="18" width="3" height="1" fill="#fff"/><rect x="10" y="23" width="3" height="1" fill="#fff"/><rect x="10" y="28" width="3" height="1" fill="#fff"/><rect x="8" y="33" width="5" height="1" fill="#fff"/><rect x="10" y="39" width="3" height="1" fill="#fff"/><rect x="10" y="44" width="3" height="1" fill="#fff"/><rect x="10" y="49" width="3" height="1" fill="#fff"/><rect x="10" y="54" width="3" height="1" fill="#fff"/><rect x="1" y="59" width="12" height="1" fill="#fff"/><text transform="translate(9.400,57.5) rotate(-90)" font-size="7.700" fill="#c4ccd4" font-family="Liberation Sans">7 in</text><rect x="10" y="65" width="3" height="1" fill="#fff"/><rect x="10" y="70" width="3" height="1" fill="#fff"/><rect x="10" y="75" width="3" height="1" fill="#fff"/><rect x="10" y="80" width="3" height="1" fill="#fff"/><rect x="8" y="85" width="5" height="1" fill="#fff"/><rect x="10" y="91" width="3" height="1" fill="#fff"/><rect x="10" y="96" width="3" height="1" fill="#fff"/><rect x="10" y="101" width="3" height="1" fill="#fff"/><rect x="10" y="106" width="3" height="1" fill="#fff"/><rect x="1" y="111" width="12" height="1" fill="#fff"/><text transform="translate(9.400,109.5) rotate(-90)" font-size="7.700" fill="#c4ccd4" font-family="Liberation Sans">6 in</text><rect x="10" y="117" width="3" height="1" fill="#fff"/><rect x="10" y="122" width="3" height="1" fill="#fff"/><rect x="10" y="127" width="3" height="1" fill="#fff"/><rect x="10" y="132" width="3" height="1" fill="#fff"/><rect x="8" y="137" width="5" height="1" fill="#fff"/><rect x="10" y="143" width="3" height="1" fill="#fff"/><rect x="10" y="148" width="3" height="1" fill="#fff"/><rect x="10" y="153" width="3" height="1" fill="#fff"/><rect x="10" y="158" width="3" height="1" fill="#fff"/><rect x="1" y="163" width="12" height="1" fill="#fff"/><text transform="translate(9.400,161.5) rotate(-90)" font-size="7.700" fill="#c4ccd4" font-family="Liberation Sans">5 in</text><rect x="10" y="169" width="3" height="1" fill="#fff"/><rect x="10" y="174" width="3" height="1" fill="#fff"/><rect x="10" y="179" width="3" height="1" fill="#fff"/><rect x="10" y="184" width="3" height="1" fill="#fff"/><rect x="8" y="189" width="5" height="1" fill="#fff"/><rect x="10" y="195" width="3" height="1" fill="#fff"/><rect x="10" y="200" width="3" height="1" fill="#fff"/><rect x="10" y="205" width="3" height="1" fill="#fff"/><rect x="10" y="210" width="3" height="1" fill="#fff"/><rect x="1" y="215" width="12" height="1" fill="#fff"/><text transform="translate(9.400,213.5) rotate(-90)" font-size="7.700" fill="#c4ccd4" font-family="Liberation Sans">4 in</text><rect x="10" y="221" width="3" height="1" fill="#fff"/><rect x="10" y="226" width="3" height="1" fill="#fff"/><rect x="10" y="231" width="3" height="1" fill="#fff"/><rect x="10" y="236" width="3" height="1" fill="#fff"/><rect x="8" y="241" width="5" height="1" fill="#fff"/><rect x="10" y="247" width="3" height="1" fill="#fff"/><rect x="10" y="252" width="3" height="1" fill="#fff"/><rect x="10" y="257" width="3" height="1" fill="#fff"/><rect x="10" y="262" width="3" height="1" fill="#fff"/><rect x="1" y="267" width="12" height="1" fill="#fff"/><text transform="translate(9.400,265.5) rotate(-90)" font-size="7.700" fill="#c4ccd4" font-family="Liberation Sans">3 in</text><rect x="10" y="273" width="3" height="1" fill="#fff"/><rect x="10" y="278" width="3" height="1" fill="#fff"/><rect x="10" y="283" width="3" height="1" fill="#fff"/><rect x="10" y="288" width="3" height="1" fill="#fff"/><rect x="8" y="293" width="5" height="1" fill="#fff"/><rect x="10" y="299" width="3" height="1" fill="#fff"/><rect x="10" y="304" width="3" height="1" fill="#fff"/><rect x="10" y="309" width="3" height="1" fill="#fff"/><rect x="10" y="314" width="3" height="1" fill="#fff"/><rect x="1" y="319" width="12" height="1" fill="#fff"/><text transform="translate(9.400,317.5) rotate(-90)" font-size="7.700" fill="#c4ccd4" font-family="Liberation Sans">2 in</text><rect x="10" y="325" width="3" height="1" fill="#fff"/><rect x="10" y="330" width="3" height="1" fill="#fff"/><rect x="10" y="335" width="3" height="1" fill="#fff"/><rect x="10" y="340" width="3" height="1" fill="#fff"/><rect x="8" y="345" width="5" height="1" fill="#fff"/><rect x="10" y="351" width="3" height="1" fill="#fff"/><rect x="10" y="356" width="3" height="1" fill="#fff"/><rect x="10" y="361" width="3" height="1" fill="#fff"/><rect x="10" y="366" width="3" height="1" fill="#fff"/><rect x="1" y="371" width="12" height="1" fill="#fff"/><text transform="translate(9.400,369.5) rotate(-90)" font-size="7.700" fill="#c4ccd4" font-family="Liberation Sans">1 in</text><rect x="10" y="377" width="3" height="1" fill="#fff"/><rect x="10" y="382" width="3" height="1" fill="#fff"/><rect x="10" y="387" width="3" height="1" fill="#fff"/><rect x="10" y="392" width="3" height="1" fill="#fff"/><rect x="8" y="397" width="5" height="1" fill="#fff"/><rect x="10" y="403" width="3" height="1" fill="#fff"/><rect x="10" y="408" width="3" height="1" fill="#fff"/><rect x="10" y="413" width="3" height="1" fill="#fff"/><rect x="10" y="418" width="3" height="1" fill="#fff"/><rect x="1" y="423" width="12" height="1" fill="#fff"/><text transform="translate(9.400,421.5) rotate(-90)" font-size="7.700" fill="#c4ccd4" font-family="Liberation Sans">0 in</text></svg>
<div class="a" style="left:0px;top:236px;width:16px;height:1px;background:#3fae3f;"></div>
<div class="a" style="left:1327px;top:228px;width:17px;height:16px;background:#5f5f5f;"></div>
<svg class="a" style="left:1332px;top:234px" width="6" height="4"><path d="M0 4h6L3 0z" fill="#fff"/></svg>
<div class="a" style="left:1327px;top:376px;width:17px;height:52px;background:#5c5c5c;border:1px solid #404040"></div>
<div class="a" style="left:1327px;top:619px;width:17px;height:15px;background:#5f5f5f;"></div>
<svg class="a" style="left:1332px;top:624px" width="6" height="4"><path d="M0 0h6L3 4z" fill="#fff"/></svg>
<div class="a" style="left:1344px;top:212px;width:20px;height:440px;background:#4a4a4a;"></div>
<div class="a" style="left:1346px;top:216px;width:20px;height:104px;background:#5a5a5a;border:1px solid #6e6e6e;border-radius:4px 0 0 4px;border-right:none"></div>
<div class="t" style="left:1349px;top:238.5px;font-size:11.600px;letter-spacing:.550px;color:#fff;writing-mode:vertical-rl;line-height:13px;height:82px;overflow:hidden">Style Manager</div>
<svg class="a" style="left:1348px;top:219px" width="16" height="16" viewBox="0 0 16 16"><path d="M1 1h11l3 3v10H1z" fill="#fff" stroke="#222" stroke-width="1"/><path d="M3 4h6M3 7h4M3 10h5M6 3v9" stroke="#444" stroke-width="1"/><path d="M8 3l6 8" stroke="#222" stroke-width="2"/><rect x="10" y="12" width="6" height="2" fill="#3a8ad8"/></svg>
<div class="a" style="left:1346px;top:322px;width:20px;height:64px;background:#5a5a5a;border:1px solid #6e6e6e;border-radius:4px 0 0 4px;border-right:none"></div>
<div class="t" style="left:1349px;top:344.5px;font-size:11.600px;letter-spacing:.550px;color:#fff;writing-mode:vertical-rl;line-height:13px;height:42px;overflow:hidden">Blocks</div>
<svg class="a" style="left:1348px;top:326px" width="16" height="16" viewBox="0 0 16 16"><rect x="1" y="1" width="14" height="14" fill="#e8e8e8" stroke="#222"/><rect x="4" y="4" width="6" height="6" fill="none" stroke="#000" stroke-width="1.300"/><rect x="7" y="7" width="5" height="5" fill="none" stroke="#000" stroke-width="1.300"/><rect x="0" y="0" width="3" height="3" fill="#12a"/><rect x="13" y="0" width="3" height="3" fill="#12a"/><rect x="0" y="13" width="3" height="3" fill="#12a"/><rect x="13" y="13" width="3" height="3" fill="#12a"/></svg>
<div class="a" style="left:1346px;top:388px;width:20px;height:74px;background:#5a5a5a;border:1px solid #6e6e6e;border-radius:4px 0 0 4px;border-right:none"></div>
<div class="t" style="left:1349px;top:410.5px;font-size:11.600px;letter-spacing:.550px;color:#fff;writing-mode:vertical-rl;line-height:13px;height:52px;overflow:hidden">Materials</div>
<svg class="a" style="left:1348px;top:391px" width="16" height="16" viewBox="0 0 16 16"><rect x="1" y="1" width="14" height="14" fill="#eee" stroke="#333"/><circle cx="8" cy="8" r="5" fill="#1a2fb0"/><circle cx="6.500" cy="6.500" r="1.800" fill="#9ab"/></svg>
<div class="a" style="left:1346px;top:464px;width:20px;height:113px;background:#5a5a5a;border:1px solid #6e6e6e;border-radius:4px 0 0 4px;border-right:none"></div>
<div class="t" style="left:1349px;top:486.5px;font-size:11.600px;letter-spacing:.550px;color:#fff;writing-mode:vertical-rl;line-height:13px;height:91px;overflow:hidden">Design Director</div>
<svg class="a" style="left:1348px;top:467px" width="16" height="16" viewBox="0 0 16 16"><circle cx="5" cy="11" r="3.500" fill="none" stroke="#1030e0" stroke-width="2.400" stroke-dasharray="2 1"/><circle cx="11" cy="5" r="3" fill="none" stroke="#111" stroke-width="2.200" stroke-dasharray="1.800 1"/><circle cx="5" cy="11" r="1.200" fill="#fff"/><circle cx="11" cy="5" r="1" fill="#fff"/></svg>
<div class="a" style="left:1346px;top:579px;width:20px;height:73px;background:#5a5a5a;border:1px solid #6e6e6e;border-radius:4px 0 0 4px;border-right:none"></div>
<div class="t" style="left:1349px;top:601.5px;font-size:11.600px;letter-spacing:.550px;color:#fff;writing-mode:vertical-rl;line-height:13px;height:51px;overflow:hidden">Selection</div>
<svg class="a" style="left:1348px;top:581px" width="16" height="16" viewBox="0 0 16 16"><rect x="1" y="1" width="14" height="14" fill="#222" stroke="#fff" stroke-width="1.400"/><path d="M3 12l4-5 2 2 4-4v3H3z" fill="#fff"/><rect x="12" y="2" width="2" height="6" fill="#3a8ad8"/></svg>
<div class="a" style="left:17px;top:634px;width:165px;height:17px;background:#505050;"></div>
<div class="a" style="left:22px;top:634px;width:65px;height:17px;background:#5b5b5b;border:1px solid #2a2a2a;border-top:none;border-left-color:#4a4a4a;border-radius:0 0 5px 5px"></div>
<svg class="a" style="left:26px;top:635px" width="14" height="13"><rect x="1.500" y="1.500" width="8" height="7" fill="#444" stroke="#fff" stroke-width="1.300"/><circle cx="8.500" cy="8" r="4" fill="#ddd" stroke="#222" stroke-width=".800"/><circle cx="7.500" cy="7" r="1.500" fill="#fff"/></svg>
<div class="t " style="left:43px;top:635.82px;font-size:12.5px;color:#fff;">Model</div>
<div class="a" style="left:87px;top:634px;width:95px;height:1px;background:#3c3c3c;"></div>
<div class="a" style="left:88px;top:635px;width:70px;height:15px;background:#565656;border:1px solid #484848;border-top:none;border-radius:0 0 4px 4px"></div>
<svg class="a" style="left:94px;top:636px" width="11" height="13"><path d="M.700 .700h6.500l3 3v8.500H.700z" fill="#fff" stroke="#222" stroke-width=".800"/><path d="M5 5v5M4 6l1-1" stroke="#12a" stroke-width="1.400" fill="none"/></svg>
<div class="a" style="left:108px;top:637px;width:42px;height:12px;overflow:hidden">
<div class="t " style="left:1.3px;top:-2.58px;font-size:12.5px;color:#a8a8a8;letter-spacing:-0.883px;">Paper 1</div>
</div>
<div class="a" style="left:181px;top:634px;width:2px;height:17px;background:#f0f0f0;"></div>
<div class="a" style="left:185px;top:634px;width:17px;height:17px;background:#5c5c5c;border:1px solid #4a4a4a"></div>
<svg class="a" style="left:191.500px;top:639.500px" width="4" height="6"><path d="M4 0v6L0 3z" fill="#fff"/></svg>
<div class="a" style="left:708px;top:634px;width:172px;height:17px;background:#5c5c5c;border:1px solid #404040"></div>
<div class="a" style="left:1310px;top:634px;width:17px;height:17px;background:#5c5c5c;border:1px solid #4a4a4a"></div>
<svg class="a" style="left:1316.500px;top:639.500px" width="4" height="6"><path d="M0 0v6L4 3z" fill="#fff"/></svg>
<div class="a" style="left:1327px;top:634px;width:17px;height:17px;background:#5a5a5a;"></div>
<div class="a" style="left:6px;top:657px;width:2px;height:2px;background:#808080;box-shadow:1px 1px 0 #444"></div>
<div class="a" style="left:6px;top:660px;width:2px;height:2px;background:#808080;box-shadow:1px 1px 0 #444"></div>
<div class="a" style="left:6px;top:663px;width:2px;height:2px;background:#808080;box-shadow:1px 1px 0 #444"></div>
<div class="a" style="left:6px;top:666px;width:2px;height:2px;background:#808080;box-shadow:1px 1px 0 #444"></div>
<div class="a" style="left:6px;top:669px;width:2px;height:2px;background:#808080;box-shadow:1px 1px 0 #444"></div>
<div class="a" style="left:6px;top:672px;width:2px;height:2px;background:#808080;box-shadow:1px 1px 0 #444"></div>
<div class="a" style="left:6px;top:675px;width:2px;height:2px;background:#808080;box-shadow:1px 1px 0 #444"></div>
<div class="a" style="left:6px;top:678px;width:2px;height:2px;background:#808080;box-shadow:1px 1px 0 #444"></div>
<div class="a" style="left:6px;top:681px;width:2px;height:2px;background:#808080;box-shadow:1px 1px 0 #444"></div>
<div class="a" style="left:6px;top:684px;width:2px;height:2px;background:#808080;box-shadow:1px 1px 0 #444"></div>
<svg class="a" style="left:12px;top:663px" width="20" height="20"><path d="M3 5c-2 7 3 13 12 12" fill="none" stroke="#e01010" stroke-width="2"/><circle cx="3" cy="6" r="1.500" fill="#fff" stroke="#e01010"/><circle cx="10" cy="16" r="1.500" fill="#fff" stroke="#e01010"/><path d="M4 2l12 12" stroke="#fff" stroke-width="1.200"/><path d="M8 4l8 8 2-2-8-8z" fill="#ffd030" stroke="#444" stroke-width=".600"/><path d="M15 1l3 3" stroke="#3a8ad8" stroke-width="2"/></svg>
<svg class="a" style="left:35px;top:665px" width="17" height="17"><path d="M3.500 4l10 10M13.500 4l-10 10" stroke="#7a0000" stroke-width="3.600" stroke-linecap="round"/><path d="M2.500 3l10 10M12.500 3l-10 10" stroke="#f20000" stroke-width="3.600" stroke-linecap="round"/></svg>
<svg class="a" style="left:57px;top:664.500px" width="17" height="16"><rect x=".800" y=".800" width="14.900" height="14" fill="#f4f4f4" stroke="#3a68d8" stroke-width="1.600"/><rect x="1.500" y="1.500" width="13.500" height="3.200" fill="#6b9cf4"/><path d="M4 3h.1M7 3h.1M10 3h.1M13 3h.1" stroke="#123" stroke-width="1.100" stroke-linecap="round"/><path d="M2 7.500h12.500M2 10h12.500M2 12.500h12.500M5.500 5v9.500M9 5v9.500M12 5v9.500" stroke="#b8b8b8" stroke-width=".900"/></svg>
<div class="a" style="left:79px;top:658px;width:1px;height:29px;background:#3e3e3e;"></div>
<div class="a" style="left:80px;top:658px;width:1px;height:29px;background:#6c6c6c;"></div>
<svg class="a" style="left:84px;top:660px" width="10" height="10"><rect x="0" y="0" width="9" height="9" fill="#6a6a6a"/><rect x="1" y="4" width="5" height="5" fill="#ffee00"/><path d="M5 4V2.500a1.800 1.800 0 0 1 3.600 0V4" fill="none" stroke="#ffee00" stroke-width="1.300"/><rect x="3" y="6" width="1" height="1" fill="#333"/></svg>
<div class="t " style="left:94px;top:656.22px;font-size:12.5px;color:#fff;">Length</div>
<svg class="a" style="left:139px;top:660px" width="10" height="10"><rect x="0" y="0" width="9" height="9" fill="#6a6a6a"/><rect x="1" y="4" width="5" height="5" fill="#ffee00"/><path d="M5 4V2.500a1.800 1.800 0 0 1 3.600 0V4" fill="none" stroke="#ffee00" stroke-width="1.300"/><rect x="3" y="6" width="1" height="1" fill="#333"/></svg>
<div class="t " style="left:149px;top:656.22px;font-size:12.5px;color:#fff;">Angle</div>
<div class="a" style="left:85px;top:669px;width:52px;height:22px;background:#3a3a3a;border:1px solid #8a8a8a;box-shadow:inset 0 0 0 1px #555"></div>
<div class="t " style="left:89px;top:673.24px;font-size:12px;color:#fff;">0 in</div>
<div class="a" style="left:140px;top:669px;width:51px;height:22px;background:#3a3a3a;border:1px solid #8a8a8a;box-shadow:inset 0 0 0 1px #555"></div>
<div class="t " style="left:144px;top:673.24px;font-size:12px;color:#fff;">0</div>
<div class="a" style="left:174px;top:671px;width:16px;height:9px;background:#5c5c5c;border:1px solid #6e6e6e"></div>
<div class="a" style="left:174px;top:681px;width:16px;height:9px;background:#5c5c5c;border:1px solid #6e6e6e"></div>
<svg class="a" style="left:180px;top:674px" width="4" height="3"><path d="M0 3h4L2 0z" fill="#fff"/></svg>
<svg class="a" style="left:180px;top:684px" width="4" height="3"><path d="M0 0h4L2 3z" fill="#fff"/></svg>
<div class="t " style="left:887px;top:700.34px;font-size:12px;color:#fff;letter-spacing:-0.770px;">SNAP</div>
<div class="a" style="left:919px;top:695px;width:1px;height:22px;background:#cfcfcf;"></div>
<div class="t " style="left:925px;top:700.34px;font-size:12px;color:#fff;letter-spacing:-1.324px;">GEO</div>
<div class="a" style="left:950px;top:695px;width:1px;height:22px;background:#cfcfcf;"></div>
<div class="a" style="left:969px;top:698px;width:6px;height:6px;background:#fff;"></div>
<div class="t " style="left:968.5px;top:705.11px;font-size:10.5px;color:#fff;">X</div>
<div class="a" style="left:978px;top:697px;width:73px;height:19px;background:#3a3a3a;border:1px solid #8a8a8a"></div>
<div class="t " style="left:983px;top:701.27px;font-size:11.5px;color:#fff;letter-spacing:-0.305px;">15.900155 in</div>
<div class="a" style="left:1065px;top:698px;width:6px;height:6px;background:#fff;"></div>
<div class="t " style="left:1064.5px;top:705.11px;font-size:10.5px;color:#fff;">Y</div>
<div class="a" style="left:1074px;top:697px;width:73px;height:19px;background:#3a3a3a;border:1px solid #8a8a8a"></div>
<div class="t " style="left:1079px;top:701.27px;font-size:11.5px;color:#fff;letter-spacing:-0.300px;">7.989058 in</div>
<div class="a" style="left:1161px;top:698px;width:6px;height:6px;background:#fff;"></div>
<div class="t " style="left:1160.5px;top:705.11px;font-size:10.5px;color:#fff;">Z</div>
<div class="a" style="left:1170px;top:697px;width:73px;height:19px;background:#3a3a3a;border:1px solid #8a8a8a"></div>
<div class="t " style="left:1175px;top:701.27px;font-size:11.5px;color:#8c8c8c;letter-spacing:-0.095px;">0 in</div>
<div class="a" style="left:1250px;top:695px;width:1px;height:22px;background:#cfcfcf;"></div>
<div class="t " style="left:1254px;top:698.77px;font-size:11.5px;color:#fff;letter-spacing:-0.672px;">54%</div>
<div class="a" style="left:1305px;top:695px;width:1px;height:22px;background:#cfcfcf;"></div>
<div class="t " style="left:1309px;top:698.34px;font-size:12px;color:#fff;letter-spacing:-0.413px;">3:55 PM</div>
<div class="a" style="left:244px;top:35px;width:869px;height:591px;background:#5d5d5d;border:1px solid #1f7fdc;box-shadow:0 1px 15px 1px rgba(0,0,0,.30)"></div>
<div class="a" style="left:245px;top:36px;width:867px;height:30px;background:#fff;"></div>
<div class="t " style="left:254px;top:44.84px;font-size:12px;color:#000;letter-spacing:-0.146px;">Customize</div>
<svg class="a" style="left:1091px;top:44px" width="12" height="12"><path d="M1 1l10 10M11 1L1 11" stroke="#000" stroke-width="1.2"/></svg>
<div class="t " style="left:259px;top:78.84px;font-size:12px;color:#c4c4c4;letter-spacing:0.091px;"><u>O</u>ptions</div>
<div class="t " style="left:313px;top:78.84px;font-size:12px;color:#c4c4c4;letter-spacing:0.040px;">Tool<u>b</u>ars</div>
<div class="t " style="left:370px;top:78.84px;font-size:12px;color:#c4c4c4;letter-spacing:0.038px;">Pop-UpToolbars</div>
<div class="t " style="left:468px;top:78.84px;font-size:12px;color:#c4c4c4;letter-spacing:-0.232px;">Palettes</div>
<div class="t " style="left:521px;top:78.84px;font-size:12px;color:#c4c4c4;letter-spacing:0.021px;">Tool <u>G</u>roups</div>
<div class="t " style="left:597px;top:78.84px;font-size:12px;color:#c4c4c4;letter-spacing:-0.145px;"><u>C</u>ommands</div>
<div class="t " style="left:671px;top:78.84px;font-size:12px;color:#c4c4c4;letter-spacing:-0.118px;"><u>K</u>eyboard</div>
<div class="a" style="left:251px;top:94px;width:854px;height:494px;background:#5d5d5d;border:1px solid #3c3c3c;border-top-color:#858585;border-left-color:#858585;border-right:2px solid #3c3c3c"></div>
<div class="a" style="left:725px;top:74px;width:116px;height:21px;background:#5d5d5d;border:1px solid #8a8a8a;border-bottom:none;border-radius:2px 2px 0 0"></div>
<div class="t " style="left:731px;top:78.81px;font-size:11.8px;color:#fff;letter-spacing:-0.223px;font-weight:bold;">Customize <u>R</u>ibbon</div>
<div class="t " style="left:268px;top:105.84px;font-size:12px;color:#fff;letter-spacing:-0.169px;">Category:</div>
<div class="t " style="left:268px;top:157.44px;font-size:12px;color:#fff;letter-spacing:-0.210px;">Commands:</div>
<div class="a" style="left:268px;top:122px;width:314px;height:23px;background:#383838;border:1px solid #000;border-right:none;box-shadow:inset 1px 0 0 #8a8a8a,inset 0 1px 0 #8a8a8a,inset 0 -1px 0 #8a8a8a"></div>
<div class="a" style="left:582px;top:122px;width:16px;height:23px;background:#383838;border:1px solid #8a8a8a"></div>
<svg class="a" style="left:587px;top:131.5px" width="6" height="4"><path d="M0 0h6L3 3.600z" fill="#fff"/></svg>
<div class="t " style="left:271px;top:127.84px;font-size:12px;color:#fff;letter-spacing:-0.086px;">AllCommands</div>
<div class="a" style="left:358px;top:152px;width:166px;height:21px;background:#383838;border:1px solid #000;border-right:none;box-shadow:inset 1px 0 0 #8a8a8a,inset 0 1px 0 #8a8a8a,inset 0 -1px 0 #8a8a8a"></div>
<div class="a" style="left:524px;top:152px;width:16px;height:21px;background:#383838;border:1px solid #8a8a8a"></div>
<svg class="a" style="left:529px;top:160.5px" width="6" height="4"><path d="M0 0h6L3 3.600z" fill="#fff"/></svg>
<div class="t " style="left:364.5px;top:156.84px;font-size:12px;color:#fff;letter-spacing:0.281px;">&lt;Find&gt;</div>
<div class="a" style="left:719px;top:152px;width:290px;height:23px;background:#383838;border:1px solid #000;border-right:none;box-shadow:inset 1px 0 0 #8a8a8a,inset 0 1px 0 #8a8a8a,inset 0 -1px 0 #8a8a8a"></div>
<div class="a" style="left:1009px;top:152px;width:16px;height:23px;background:#383838;border:1px solid #8a8a8a"></div>
<svg class="a" style="left:1014px;top:161.5px" width="6" height="4"><path d="M0 0h6L3 3.600z" fill="#fff"/></svg>
<div class="t " style="left:723px;top:157.84px;font-size:12px;color:#fff;letter-spacing:-0.007px;">Main Tabs</div>
<div class="a" style="left:541px;top:153.5px;width:20px;height:17px;background:#676767;border:1px solid #616161"></div>
<div class="a" style="left:562px;top:153.5px;width:20px;height:17px;background:#676767;border:1px solid #616161"></div>
<svg class="a" style="left:547px;top:157.500px" width="5" height="8"><path d="M5 0v8L0 4z" fill="#fff"/></svg>
<svg class="a" style="left:569.500px;top:157.500px" width="5" height="8"><path d="M0 0v8L5 4z" fill="#fff"/></svg>
<div class="a" style="left:268px;top:182px;width:329px;height:380px;background:#484848;border:2px solid #f4f4f4"></div>
<div class="a" style="left:578px;top:184px;width:17px;height:376px;background:#f0f0f0;"></div>
<div class="a" style="left:579px;top:461px;width:15px;height:18px;background:#cdcdcd;"></div>
<svg class="a" style="left:581.500px;top:188.500px" width="10" height="7"><path d="M1.800 5.500l3.300-3.300 3.300 3.300" fill="none" stroke="#505050" stroke-width="1.900"/></svg>
<svg class="a" style="left:581.500px;top:548.500px" width="10" height="7"><path d="M1.800 1.800l3.300 3.300 3.300-3.300" fill="none" stroke="#505050" stroke-width="1.900"/></svg>
<div class="a" style="left:270px;top:218px;width:308px;height:17px;background:#5f5f5f;"></div>
<div class="t " style="left:292px;top:186.54px;font-size:12px;color:#fff;letter-spacing:-0.070px;">Grid</div>
<div class="t " style="left:292px;top:203.54px;font-size:12px;color:#fff;letter-spacing:0.015px;">Intersection</div>
<div class="t " style="left:292px;top:220.54px;font-size:12px;color:#fff;letter-spacing:0.286px;">Middle point</div>
<div class="t " style="left:292px;top:237.54px;font-size:12px;color:#fff;letter-spacing:-0.217px;">Nearest On Facet</div>
<div class="t " style="left:292px;top:254.54px;font-size:12px;color:#fff;letter-spacing:-0.139px;">Nearest On Graphic</div>
<div class="t " style="left:292px;top:271.54px;font-size:12px;color:#fff;letter-spacing:-0.153px;">No Snap</div>
<div class="t " style="left:292px;top:288.54px;font-size:12px;color:#fff;letter-spacing:0.062px;">Opposite</div>
<div class="t " style="left:292px;top:305.54px;font-size:12px;color:#fff;letter-spacing:0.220px;">Ortho</div>
<div class="t " style="left:292px;top:322.54px;font-size:12px;color:#fff;letter-spacing:0.009px;">Projection</div>
<div class="t " style="left:292px;top:339.54px;font-size:12px;color:#fff;letter-spacing:0.017px;">Quadrant Point</div>
<div class="t " style="left:292px;top:356.54px;font-size:12px;color:#fff;letter-spacing:-0.012px;">Show Magnetic Point</div>
<div class="t " style="left:290px;top:373.54px;font-size:12px;color:#fff;letter-spacing:-0.220px;">Snap Options...</div>
<div class="t " style="left:292px;top:390.54px;font-size:12px;color:#fff;letter-spacing:0.099px;">Tangent</div>
<div class="t " style="left:292px;top:407.54px;font-size:12px;color:#fff;letter-spacing:-0.141px;">Use WorkPlane Intersections</div>
<div class="t " style="left:292px;top:424.54px;font-size:12px;color:#fff;letter-spacing:-0.042px;">Vertex</div>
<div class="t " style="left:292px;top:441.54px;font-size:12px;color:#fff;letter-spacing:-0.085px;">By Control Points</div>
<div class="t " style="left:292px;top:458.54px;font-size:12px;color:#fff;letter-spacing:-0.208px;">By Fit Points</div>
<div class="t " style="left:292px;top:475.54px;font-size:12px;color:#fff;letter-spacing:0.034px;">Multi Landing Stair</div>
<div class="t " style="left:292px;top:492.54px;font-size:12px;color:#fff;letter-spacing:-0.011px;">Multi Landing Stair by Path</div>
<div class="t " style="left:292px;top:509.54px;font-size:12px;color:#fff;letter-spacing:-0.188px;">Spiral Stair</div>
<div class="t " style="left:292px;top:526.54px;font-size:12px;color:#fff;letter-spacing:-0.181px;">Stair By Linework</div>
<div class="t " style="left:292px;top:543.54px;font-size:12px;color:#fff;letter-spacing:-0.064px;">Straight Stair</div>
<div class="a" style="left:611px;top:310px;width:97px;height:26px;background:#383838;border:1px solid;border-color:#7c7c7c #3c3c3c #343434 #7c7c7c;box-shadow:inset 1px 1px 0 #525252,inset -1px -1px 0 #464646"></div>
<div class="t " style="left:638.7109375px;top:317.14px;font-size:12px;color:#fff;letter-spacing:0.479px;">Add &gt;&gt;</div>
<div class="a" style="left:611px;top:342px;width:97px;height:26px;background:#383838;border:1px solid;border-color:#7c7c7c #3c3c3c #343434 #7c7c7c;box-shadow:inset 1px 1px 0 #525252,inset -1px -1px 0 #464646"></div>
<div class="t " style="left:628.2255859375px;top:349.14px;font-size:12px;color:#fff;letter-spacing:0.057px;">&lt;&lt; Remove</div>
<div class="a" style="left:1045px;top:310px;width:39px;height:26px;background:#383838;border:1px solid;border-color:#7c7c7c #3c3c3c #343434 #7c7c7c;box-shadow:inset 1px 1px 0 #525252,inset -1px -1px 0 #464646"></div>
<div class="a" style="left:1045px;top:342px;width:39px;height:26px;background:#383838;border:1px solid;border-color:#7c7c7c #3c3c3c #343434 #7c7c7c;box-shadow:inset 1px 1px 0 #525252,inset -1px -1px 0 #464646"></div>
<svg class="a" style="left:1060px;top:319px" width="10" height="7"><path d="M1 6h8L5 1.500z" fill="#000" stroke="#fff" stroke-width="1.2"/></svg>
<svg class="a" style="left:1060px;top:351px" width="10" height="7"><path d="M1 1h8L5 5.500z" fill="#000" stroke="#fff" stroke-width="1.2"/></svg>
<div class="a" style="left:721px;top:485px;width:97px;height:26px;background:#383838;border:1px solid;border-color:#7c7c7c #3c3c3c #343434 #7c7c7c;box-shadow:inset 1px 1px 0 #525252,inset -1px -1px 0 #464646"></div>
<div class="t " style="left:746.1767578125px;top:492.14px;font-size:12px;color:#fff;letter-spacing:0.025px;">New Tab</div>
<div class="a" style="left:826px;top:485px;width:97px;height:26px;background:#383838;border:1px solid;border-color:#7c7c7c #3c3c3c #343434 #7c7c7c;box-shadow:inset 1px 1px 0 #525252,inset -1px -1px 0 #464646"></div>
<div class="t " style="left:844.2509765625px;top:492.14px;font-size:12px;color:#fff;letter-spacing:-0.022px;">New Group</div>
<div class="a" style="left:931px;top:485px;width:97px;height:26px;background:#383838;border:1px solid;border-color:#7c7c7c #3c3c3c #343434 #7c7c7c;box-shadow:inset 1px 1px 0 #525252,inset -1px -1px 0 #464646"></div>
<div class="t " style="left:958.013671875px;top:492.14px;font-size:12px;color:#fff;letter-spacing:-0.398px;">Rename</div>
<div class="a" style="left:826px;top:519px;width:145px;height:26px;background:#383838;border:1px solid;border-color:#7c7c7c #3c3c3c #343434 #7c7c7c;box-shadow:inset 1px 1px 0 #525252,inset -1px -1px 0 #464646"></div>
<div class="t " style="left:847px;top:525.84px;font-size:12px;color:#fff;letter-spacing:0.039px;">Import Ribbon...</div>
<svg class="a" style="left:953px;top:529px" width="11" height="6"><path d="M0 0h11L5.5 6z" fill="#fff"/></svg>
<div class="t " style="left:725px;top:524.84px;font-size:12px;color:#fff;letter-spacing:-0.024px;">Customizations:</div>
<div class="a" style="left:938px;top:594px;width:81px;height:25px;background:#383838;border:1px solid;border-color:#7c7c7c #3c3c3c #343434 #7c7c7c;box-shadow:inset 1px 1px 0 #525252,inset -1px -1px 0 #464646"></div>
<div class="t " style="left:964.1298828125px;top:600.64px;font-size:12px;color:#fff;letter-spacing:-0.388px;">Close</div>
<div class="a" style="left:1025px;top:594px;width:81px;height:25px;background:#383838;border:1px solid;border-color:#7c7c7c #3c3c3c #343434 #7c7c7c;box-shadow:inset 1px 1px 0 #525252,inset -1px -1px 0 #464646"></div>
<div class="t " style="left:1053.1220703125px;top:600.64px;font-size:12px;color:#fff;letter-spacing:0.019px;">Help</div>
<div class="a" style="left:721px;top:182px;width:304px;height:269px;background:#484848;border:2px solid #f4f4f4;border-left-width:1px"></div>
<div class="a" style="left:722px;top:184px;width:284px;height:17px;background:#f0f0f5;"></div>
<div class="t " style="left:725.5px;top:187.47px;font-size:11.5px;color:#111;letter-spacing:-0.209px;font-weight:bold;">Main Tabs</div>
<div class="a" style="left:1006px;top:184px;width:17px;height:265px;background:#f0f0f0;"></div>
<div class="a" style="left:1007px;top:201px;width:15px;height:213px;background:#cdcdcd;"></div>
<svg class="a" style="left:1009.500px;top:188.500px" width="10" height="7"><path d="M1.800 5.500l3.300-3.300 3.300 3.300" fill="none" stroke="#505050" stroke-width="1.900"/></svg>
<svg class="a" style="left:1009.500px;top:438.500px" width="10" height="7"><path d="M1.800 1.800l3.300 3.300 3.300-3.300" fill="none" stroke="#505050" stroke-width="1.900"/></svg>
<div class="a" style="left:722px;top:201px;width:284px;height:248px;overflow:hidden">
<div class="a" style="left:5px;top:4px;width:9px;height:9px;background:radial-gradient(#fff 30%,#dcdcdc);border:1px solid #a4a4a4"></div>
<div class="a" style="left:7px;top:8px;width:5px;height:1px;background:#2a3f96"></div><div class="a" style="left:9px;top:6px;width:1px;height:5px;background:#2a3f96"></div>
<div class="a" style="left:19.200px;top:1.2px;width:12px;height:12px;background:#fff;border-radius:1.500px;box-shadow:0 0 0 .700px #333"></div>
<svg class="a" style="left:19.200px;top:1.2px" width="12" height="12"><path d="M1.800 6.300l2.800 3L10.300 2.700" fill="none" stroke="#333" stroke-width="1.250"/></svg>
<div class="t " style="left:37px;top:2.94px;font-size:12px;color:#fff;letter-spacing:-0.347px;">File</div>
<div class="a" style="left:5px;top:21px;width:9px;height:9px;background:radial-gradient(#fff 30%,#dcdcdc);border:1px solid #a4a4a4"></div>
<div class="a" style="left:7px;top:25px;width:5px;height:1px;background:#2a3f96"></div><div class="a" style="left:9px;top:23px;width:1px;height:5px;background:#2a3f96"></div>
<div class="a" style="left:19.200px;top:18.2px;width:12px;height:12px;background:#fff;border-radius:1.500px;box-shadow:0 0 0 .700px #333"></div>
<svg class="a" style="left:19.200px;top:18.2px" width="12" height="12"><path d="M1.800 6.300l2.800 3L10.300 2.700" fill="none" stroke="#333" stroke-width="1.250"/></svg>
<div class="t " style="left:37px;top:19.94px;font-size:12px;color:#fff;letter-spacing:-0.142px;">Edit</div>
<div class="a" style="left:5px;top:38px;width:9px;height:9px;background:radial-gradient(#fff 30%,#dcdcdc);border:1px solid #a4a4a4"></div>
<div class="a" style="left:7px;top:42px;width:5px;height:1px;background:#2a3f96"></div><div class="a" style="left:9px;top:40px;width:1px;height:5px;background:#2a3f96"></div>
<div class="a" style="left:19.200px;top:35.2px;width:12px;height:12px;background:#fff;border-radius:1.500px;box-shadow:0 0 0 .700px #333"></div>
<svg class="a" style="left:19.200px;top:35.2px" width="12" height="12"><path d="M1.800 6.300l2.800 3L10.300 2.700" fill="none" stroke="#333" stroke-width="1.250"/></svg>
<div class="t " style="left:37px;top:36.94px;font-size:12px;color:#fff;letter-spacing:-0.120px;">View</div>
<div class="a" style="left:5px;top:55px;width:9px;height:9px;background:radial-gradient(#fff 30%,#dcdcdc);border:1px solid #a4a4a4"></div>
<div class="a" style="left:7px;top:59px;width:5px;height:1px;background:#2a3f96"></div><div class="a" style="left:9px;top:57px;width:1px;height:5px;background:#2a3f96"></div>
<div class="a" style="left:19.200px;top:52.2px;width:12px;height:12px;background:#fff;border-radius:1.500px;box-shadow:0 0 0 .700px #333"></div>
<div class="t " style="left:37px;top:53.94px;font-size:12px;color:#fff;letter-spacing:-0.148px;">Workspace</div>
<div class="a" style="left:5px;top:72px;width:9px;height:9px;background:radial-gradient(#fff 30%,#dcdcdc);border:1px solid #a4a4a4"></div>
<div class="a" style="left:7px;top:76px;width:5px;height:1px;background:#2a3f96"></div><div class="a" style="left:9px;top:74px;width:1px;height:5px;background:#2a3f96"></div>
<div class="a" style="left:19.200px;top:69.2px;width:12px;height:12px;background:#fff;border-radius:1.500px;box-shadow:0 0 0 .700px #333"></div>
<svg class="a" style="left:19.200px;top:69.2px" width="12" height="12"><path d="M1.800 6.300l2.800 3L10.300 2.700" fill="none" stroke="#333" stroke-width="1.250"/></svg>
<div class="t " style="left:37px;top:70.94px;font-size:12px;color:#fff;letter-spacing:-0.161px;">Draw</div>
<div class="a" style="left:18px;top:85px;width:266px;height:17px;background:#8aabdc"></div>
<div class="a" style="left:5px;top:89px;width:9px;height:9px;background:radial-gradient(#fff 30%,#dcdcdc);border:1px solid #a4a4a4"></div>
<div class="a" style="left:7px;top:93px;width:5px;height:1px;background:#2a3f96"></div><div class="a" style="left:9px;top:91px;width:1px;height:5px;background:#2a3f96"></div>
<div class="a" style="left:19.200px;top:86.2px;width:12px;height:12px;background:#fff;border-radius:1.500px;box-shadow:0 0 0 .700px #333"></div>
<svg class="a" style="left:19.200px;top:86.2px" width="12" height="12"><path d="M1.800 6.300l2.800 3L10.300 2.700" fill="none" stroke="#333" stroke-width="1.250"/></svg>
<div class="t " style="left:37px;top:87.94px;font-size:12px;color:#000;letter-spacing:-0.069px;">Insert</div>
<div class="a" style="left:5px;top:106px;width:9px;height:9px;background:radial-gradient(#fff 30%,#dcdcdc);border:1px solid #a4a4a4"></div>
<div class="a" style="left:7px;top:110px;width:5px;height:1px;background:#2a3f96"></div><div class="a" style="left:9px;top:108px;width:1px;height:5px;background:#2a3f96"></div>
<div class="a" style="left:19.200px;top:103.2px;width:12px;height:12px;background:#fff;border-radius:1.500px;box-shadow:0 0 0 .700px #333"></div>
<svg class="a" style="left:19.200px;top:103.2px" width="12" height="12"><path d="M1.800 6.300l2.800 3L10.300 2.700" fill="none" stroke="#333" stroke-width="1.250"/></svg>
<div class="t " style="left:37px;top:104.94px;font-size:12px;color:#fff;letter-spacing:0.027px;">Architecture</div>
<div class="a" style="left:5px;top:123px;width:9px;height:9px;background:radial-gradient(#fff 30%,#dcdcdc);border:1px solid #a4a4a4"></div>
<div class="a" style="left:7px;top:127px;width:5px;height:1px;background:#2a3f96"></div><div class="a" style="left:9px;top:125px;width:1px;height:5px;background:#2a3f96"></div>
<div class="a" style="left:19.200px;top:120.2px;width:12px;height:12px;background:#fff;border-radius:1.500px;box-shadow:0 0 0 .700px #333"></div>
<svg class="a" style="left:19.200px;top:120.2px" width="12" height="12"><path d="M1.800 6.300l2.800 3L10.300 2.700" fill="none" stroke="#333" stroke-width="1.250"/></svg>
<div class="t " style="left:37px;top:121.94px;font-size:12px;color:#fff;letter-spacing:-0.073px;">Format</div>
<div class="a" style="left:5px;top:140px;width:9px;height:9px;background:radial-gradient(#fff 30%,#dcdcdc);border:1px solid #a4a4a4"></div>
<div class="a" style="left:7px;top:144px;width:5px;height:1px;background:#2a3f96"></div><div class="a" style="left:9px;top:142px;width:1px;height:5px;background:#2a3f96"></div>
<div class="a" style="left:19.200px;top:137.2px;width:12px;height:12px;background:#fff;border-radius:1.500px;box-shadow:0 0 0 .700px #333"></div>
<svg class="a" style="left:19.200px;top:137.2px" width="12" height="12"><path d="M1.800 6.300l2.800 3L10.300 2.700" fill="none" stroke="#333" stroke-width="1.250"/></svg>
<div class="t " style="left:37px;top:138.94px;font-size:12px;color:#fff;letter-spacing:0.067px;">Tools</div>
<div class="a" style="left:5px;top:157px;width:9px;height:9px;background:radial-gradient(#fff 30%,#dcdcdc);border:1px solid #a4a4a4"></div>
<div class="a" style="left:7px;top:161px;width:5px;height:1px;background:#2a3f96"></div><div class="a" style="left:9px;top:159px;width:1px;height:5px;background:#2a3f96"></div>
<div class="a" style="left:19.200px;top:154.2px;width:12px;height:12px;background:#fff;border-radius:1.500px;box-shadow:0 0 0 .700px #333"></div>
<svg class="a" style="left:19.200px;top:154.2px" width="12" height="12"><path d="M1.800 6.300l2.800 3L10.300 2.700" fill="none" stroke="#333" stroke-width="1.250"/></svg>
<div class="t " style="left:37px;top:155.94px;font-size:12px;color:#fff;letter-spacing:-0.076px;">New Tab (Custom)</div>
<div class="a" style="left:5px;top:174px;width:9px;height:9px;background:radial-gradient(#fff 30%,#dcdcdc);border:1px solid #a4a4a4"></div>
<div class="a" style="left:7px;top:178px;width:5px;height:1px;background:#2a3f96"></div><div class="a" style="left:9px;top:176px;width:1px;height:5px;background:#2a3f96"></div>
<div class="a" style="left:19.200px;top:171.2px;width:12px;height:12px;background:#fff;border-radius:1.500px;box-shadow:0 0 0 .700px #333"></div>
<svg class="a" style="left:19.200px;top:171.2px" width="12" height="12"><path d="M1.800 6.300l2.800 3L10.300 2.700" fill="none" stroke="#333" stroke-width="1.250"/></svg>
<div class="t " style="left:37px;top:172.94px;font-size:12px;color:#fff;letter-spacing:0.324px;">Modify</div>
<div class="a" style="left:5px;top:191px;width:9px;height:9px;background:radial-gradient(#fff 30%,#dcdcdc);border:1px solid #a4a4a4"></div>
<div class="a" style="left:7px;top:195px;width:5px;height:1px;background:#2a3f96"></div><div class="a" style="left:9px;top:193px;width:1px;height:5px;background:#2a3f96"></div>
<div class="a" style="left:19.200px;top:188.2px;width:12px;height:12px;background:#fff;border-radius:1.500px;box-shadow:0 0 0 .700px #333"></div>
<svg class="a" style="left:19.200px;top:188.2px" width="12" height="12"><path d="M1.800 6.300l2.800 3L10.300 2.700" fill="none" stroke="#333" stroke-width="1.250"/></svg>
<div class="t " style="left:37px;top:189.94px;font-size:12px;color:#fff;letter-spacing:0.036px;">Add-Ons</div>
<div class="a" style="left:5px;top:208px;width:9px;height:9px;background:radial-gradient(#fff 30%,#dcdcdc);border:1px solid #a4a4a4"></div>
<div class="a" style="left:7px;top:212px;width:5px;height:1px;background:#2a3f96"></div><div class="a" style="left:9px;top:210px;width:1px;height:5px;background:#2a3f96"></div>
<div class="a" style="left:19.200px;top:205.2px;width:12px;height:12px;background:#fff;border-radius:1.500px;box-shadow:0 0 0 .700px #333"></div>
<svg class="a" style="left:19.200px;top:205.2px" width="12" height="12"><path d="M1.800 6.300l2.800 3L10.300 2.700" fill="none" stroke="#333" stroke-width="1.250"/></svg>
<div class="t " style="left:37px;top:206.94px;font-size:12px;color:#fff;letter-spacing:0.044px;">Modes</div>
<div class="a" style="left:5px;top:225px;width:9px;height:9px;background:radial-gradient(#fff 30%,#dcdcdc);border:1px solid #a4a4a4"></div>
<div class="a" style="left:7px;top:229px;width:5px;height:1px;background:#2a3f96"></div><div class="a" style="left:9px;top:227px;width:1px;height:5px;background:#2a3f96"></div>
<div class="a" style="left:19.200px;top:222.2px;width:12px;height:12px;background:#fff;border-radius:1.500px;box-shadow:0 0 0 .700px #333"></div>
<svg class="a" style="left:19.200px;top:222.2px" width="12" height="12"><path d="M1.800 6.300l2.800 3L10.300 2.700" fill="none" stroke="#333" stroke-width="1.250"/></svg>
<div class="t " style="left:37px;top:223.94px;font-size:12px;color:#fff;letter-spacing:0.091px;">Options</div>
<div class="a" style="left:5px;top:242px;width:9px;height:9px;background:radial-gradient(#fff 30%,#dcdcdc);border:1px solid #a4a4a4"></div>
<div class="a" style="left:7px;top:246px;width:5px;height:1px;background:#2a3f96"></div><div class="a" style="left:9px;top:244px;width:1px;height:5px;background:#2a3f96"></div>
<div class="a" style="left:19.200px;top:239.2px;width:12px;height:12px;background:#fff;border-radius:1.500px;box-shadow:0 0 0 .700px #333"></div>
<svg class="a" style="left:19.200px;top:239.2px" width="12" height="12"><path d="M1.800 6.300l2.800 3L10.300 2.700" fill="none" stroke="#333" stroke-width="1.250"/></svg>
<div class="t " style="left:37px;top:240.94px;font-size:12px;color:#fff;letter-spacing:0.169px;">Window</div>
</div>
<div class="a" style="left:722px;top:184px;width:1px;height:265px;background:#f4f4f4;"></div>
<svg class="a" style="left:272px;top:183.8px" width="16" height="16" viewBox="0 0 16 16"><rect x="-0.10" y="0.10" width="3.400" height="3.400" rx=".600" fill="#000"/><rect x="0.95" y="1.15" width="1.300" height="1.300" fill="#fff"/><rect x="3.90" y="0.10" width="3.400" height="3.400" rx=".600" fill="#000"/><rect x="4.95" y="1.15" width="1.300" height="1.300" fill="#fff"/><rect x="7.90" y="0.10" width="3.400" height="3.400" rx=".600" fill="#000"/><rect x="8.95" y="1.15" width="1.300" height="1.300" fill="#fff"/><rect x="11.90" y="0.10" width="3.400" height="3.400" rx=".600" fill="#000"/><rect x="12.95" y="1.15" width="1.300" height="1.300" fill="#fff"/><rect x="-0.10" y="4.05" width="3.400" height="3.400" rx=".600" fill="#000"/><rect x="0.95" y="5.10" width="1.300" height="1.300" fill="#fff"/><rect x="3.90" y="4.05" width="3.400" height="3.400" rx=".600" fill="#000"/><rect x="4.95" y="5.10" width="1.300" height="1.300" fill="#fff"/><rect x="7.90" y="4.05" width="3.400" height="3.400" rx=".600" fill="#000"/><rect x="8.95" y="5.10" width="1.300" height="1.300" fill="#fff"/><rect x="11.90" y="4.05" width="3.400" height="3.400" rx=".600" fill="#000"/><rect x="12.95" y="5.10" width="1.300" height="1.300" fill="#fff"/><rect x="-0.10" y="8.00" width="3.400" height="3.400" rx=".600" fill="#000"/><rect x="0.95" y="9.05" width="1.300" height="1.300" fill="#fff"/><rect x="3.90" y="8.00" width="3.400" height="3.400" rx=".600" fill="#000"/><rect x="4.95" y="9.05" width="1.300" height="1.300" fill="#fff"/><rect x="7.90" y="8.00" width="3.400" height="3.400" rx=".600" fill="#000"/><rect x="8.95" y="9.05" width="1.300" height="1.300" fill="#fff"/><rect x="11.90" y="8.00" width="3.400" height="3.400" rx=".600" fill="#000"/><rect x="12.95" y="9.05" width="1.300" height="1.300" fill="#fff"/><rect x="-0.10" y="11.95" width="3.400" height="3.400" rx=".600" fill="#000"/><rect x="0.95" y="13.00" width="1.300" height="1.300" fill="#fff"/><rect x="3.90" y="11.95" width="3.400" height="3.400" rx=".600" fill="#000"/><rect x="4.95" y="13.00" width="1.300" height="1.300" fill="#fff"/><rect x="7.90" y="11.95" width="3.400" height="3.400" rx=".600" fill="#000"/><rect x="8.95" y="13.00" width="1.300" height="1.300" fill="#fff"/><rect x="11.90" y="11.95" width="3.400" height="3.400" rx=".600" fill="#000"/><rect x="12.95" y="13.00" width="1.300" height="1.300" fill="#fff"/><rect x="11" y="10.5" width="5.2" height="5.2" fill="#000"/><rect x="12" y="11.5" width="3.2" height="3.2" fill="#f00"/></svg>
<svg class="a" style="left:272px;top:200.8px" width="16" height="16" viewBox="0 0 16 16"><path d="M1 1.5L15.500 15.500M15 1.500L1 15" fill="none" stroke="#000" stroke-width="3.2" stroke-linecap="butt"/><path d="M1 1.5L15.500 15.500M15 1.500L1 15" fill="none" stroke="#fff" stroke-width="1.2" stroke-linecap="butt"/><rect x="6.600" y="6.900" width="2.400" height="2.400" fill="#f88" stroke="#f00" stroke-width="1"/></svg>
<svg class="a" style="left:272px;top:217.8px" width="16" height="16" viewBox="0 0 16 16"><path d="M1.500 14L11 4M6 9.500L11.500 14.500" fill="none" stroke="#000" stroke-width="3.2" stroke-linecap="butt"/><path d="M1.500 14L11 4M6 9.500L11.500 14.500" fill="none" stroke="#fff" stroke-width="1.2" stroke-linecap="butt"/><rect x="9.5" y="0.5" width="5" height="5" fill="#000"/><rect x="10.5" y="1.5" width="3" height="3" fill="#fff"/><rect x="3" y="6.5" width="5.4" height="5.4" fill="#000"/><rect x="4" y="7.5" width="3.4" height="3.4" fill="#f00"/></svg>
<svg class="a" style="left:272px;top:234.8px" width="16" height="16" viewBox="0 0 16 16"><path d="M1.500 14.500L3.500 7Q4 4.500 6.500 4.500H9.500Q12 4.500 12.500 7L14.500 14.500z" fill="none" stroke="#000" stroke-width="3.2" stroke-linecap="butt"/><path d="M1.500 14.500L3.500 7Q4 4.500 6.500 4.500H9.500Q12 4.500 12.500 7L14.500 14.500z" fill="none" stroke="#fff" stroke-width="1.3" stroke-linecap="butt"/><path d="M13 2.500L15 .800" fill="none" stroke="#000" stroke-width="2.4" stroke-linecap="butt"/><path d="M13 2.500L15 .800" fill="none" stroke="#fff" stroke-width="1" stroke-linecap="butt"/><path d="M4.500 12.500L5.500 8.500Q6 7 7 7H9Q10 7 10.500 8.500L11.500 12.500" fill="none" stroke="#fff" stroke-width="1"/><rect x="6.0" y="8.3" width="4.0" height="4.0" fill="#000"/><rect x="6.5" y="8.8" width="3" height="3" fill="#f00"/></svg>
<svg class="a" style="left:272px;top:251.8px" width="16" height="16" viewBox="0 0 16 16"><path d="M8 1.500L1.500 7.500L6 11.500M7.500 8.500L14 15" fill="none" stroke="#000" stroke-width="3.2" stroke-linecap="butt"/><path d="M8 1.500L1.500 7.500L6 11.500M7.500 8.500L14 15" fill="none" stroke="#fff" stroke-width="1.2" stroke-linecap="butt"/><rect x="10" y="0" width="5" height="5" fill="#000"/><rect x="11" y="1" width="3" height="3" fill="#fff"/><rect x="4" y="4.5" width="5.2" height="5.2" fill="#000"/><rect x="5" y="5.5" width="3.2" height="3.2" fill="#f00"/></svg>
<svg class="a" style="left:272px;top:268.8px" width="16" height="16" viewBox="0 0 16 16"><defs><linearGradient id="ns" x1="0" y1="0" x2="1" y2="1"><stop offset="0" stop-color="#fff"/><stop offset="1" stop-color="#999"/></linearGradient></defs><path d="M4.500 2.500L9 .800l1.500 1.500" fill="none" stroke="#000" stroke-width="2.600"/><path d="M4.500 2.500L9 .800l1.500 1.500" fill="none" stroke="#fff" stroke-width="1"/><path d="M4 5.500L10 2.500L14 8.500Q15 13 11.500 14Q8 14.500 6.500 11z" fill="url(#ns)" stroke="#000" stroke-width="1"/><rect x="11.500" y="0" width="4.500" height="4.500" fill="#000"/><path d="M12.300 .800l1.500 1.500l1.500-1.500M13.800 2.300v1.800" stroke="#f00" stroke-width="1" fill="none"/><rect x="0" y="10.500" width="4.500" height="4.500" fill="#000"/><path d="M.800 11.300l3 3M3.800 11.300l-3 3" stroke="#f00" stroke-width="1"/></svg>
<svg class="a" style="left:272px;top:285.8px" width="16" height="16" viewBox="0 0 16 16"><path d="M0 9.500H16M8 5V15" fill="none" stroke="#000" stroke-width="3" stroke-linecap="butt"/><path d="M0 9.500H16M8 5V15" fill="none" stroke="#fff" stroke-width="1.2" stroke-linecap="butt"/><rect x="5" y="0" width="6" height="5.500" fill="#000"/><path d="M6 1l4 3.500M10 1L6 4.500M8 .500v4.500" stroke="#fff" stroke-width="1.100"/><rect x="6.500" y="12.500" width="3" height="3" fill="#000"/><rect x="7.400" y="13.400" width="1.200" height="1.200" fill="#fff"/></svg>
<svg class="a" style="left:272px;top:302.8px" width="16" height="16" viewBox="0 0 16 16"><path d="M0 9.500H15M7.500 2.500V16M1.500 3.500L13.500 15.500M13 4L2 15" fill="none" stroke="#000" stroke-width="3" stroke-linecap="butt"/><path d="M0 9.500H15M7.500 2.500V16M1.500 3.500L13.500 15.500M13 4L2 15" fill="none" stroke="#fff" stroke-width="1.2" stroke-linecap="butt"/><rect x="11" y="1" width="5.2" height="5.2" fill="#000"/><rect x="12" y="2" width="3.2" height="3.2" fill="#f00"/></svg>
<svg class="a" style="left:272px;top:319.8px" width="16" height="16" viewBox="0 0 16 16"><rect x="5" y="0" width="6" height="5.500" fill="#000"/><path d="M6 1l4 3.500M10 1L6 4.500M8 .500v4.500" stroke="#fff" stroke-width="1.100"/><path d="M8 5.500V11" fill="none" stroke="#000" stroke-width="2.6" stroke-linecap="butt"/><path d="M8 5.500V11" fill="none" stroke="#fff" stroke-width="1" stroke-linecap="butt"/><path d="M0 12.500H16" fill="none" stroke="#000" stroke-width="3" stroke-linecap="butt"/><path d="M0 12.500H16" fill="none" stroke="#fff" stroke-width="1.2" stroke-linecap="butt"/><circle cx="8" cy="12.500" r="1.800" fill="#fff" stroke="#000" stroke-width=".800"/></svg>
<svg class="a" style="left:272px;top:336.8px" width="16" height="16" viewBox="0 0 16 16"><circle cx="8" cy="8" r="6.500" fill="none" stroke="#000" stroke-width="3.200"/><circle cx="8" cy="8" r="6.500" fill="none" stroke="#fff" stroke-width="1.200"/><path d="M8 2.500V13.500M2.500 8H13.500" stroke="#ddd" stroke-width=".900" stroke-dasharray="1 1"/><path d="M6.500 1.200L8 3l1.500-1.800zM6.500 14.800L8 13l1.500 1.800zM1.200 6.500L3 8l-1.800 1.500zM14.800 6.500L13 8l1.800 1.500z" fill="#f00"/></svg>
<svg class="a" style="left:272px;top:353.8px" width="16" height="16" viewBox="0 0 16 16"><path d="M3.500 10.500V7a4.500 4.500 0 0 1 9 0v3.500" fill="none" stroke="#000" stroke-width="5"/><path d="M3.500 10V7a4.500 4.500 0 0 1 9 0v3" fill="none" stroke="#f00" stroke-width="3"/><rect x="2" y="10" width="3" height="1.800" fill="#fff"/><rect x="11" y="10" width="3" height="1.800" fill="#fff"/><path d="M6.800 9.500L8 6l1.200 3.500z" fill="#fff" stroke="#000" stroke-width=".600"/><path d="M6.500 11.500L3 15M9.500 11.500L13 15" fill="none" stroke="#000" stroke-width="2.6" stroke-linecap="butt"/><path d="M6.500 11.500L3 15M9.500 11.500L13 15" fill="none" stroke="#fff" stroke-width="1.1" stroke-linecap="butt"/><rect x="6.500" y="9.500" width="3" height="2.500" fill="#f00"/></svg>
<svg class="a" style="left:270px;top:370.8px" width="16" height="16" viewBox="0 0 16 16"><path d="M3 4.500L7 .800M2.500 8l5-4.500L14 10.500l-4.500 4.500z" fill="none" stroke="#303030" stroke-width="1.200"/></svg>
<svg class="a" style="left:272px;top:387.8px" width="16" height="16" viewBox="0 0 16 16"><path d="M3.500 15Q0 7 9 2.500Q12 1.500 15.500 2.500" fill="none" stroke="#000" stroke-width="3.2" stroke-linecap="butt"/><path d="M3.500 15Q0 7 9 2.500Q12 1.500 15.500 2.500" fill="none" stroke="#fff" stroke-width="1.3" stroke-linecap="butt"/><path d="M1 9L9 1" fill="none" stroke="#000" stroke-width="2.4" stroke-linecap="butt"/><path d="M1 9L9 1" fill="none" stroke="#fff" stroke-width="1" stroke-linecap="butt"/><rect x="2" y="2.5" width="5.2" height="5.2" fill="#000"/><rect x="3" y="3.5" width="3.2" height="3.2" fill="#f00"/></svg>
<svg class="a" style="left:272px;top:404.8px" width="16" height="16" viewBox="0 0 16 16"><path d="M8 1L15.500 13.500H.500z" fill="#ddd" stroke="#000" stroke-width="1"/><path d="M8 1L11 13.500L15.500 13.500z" fill="#999"/><path d="M8 .500V4" stroke="#fff" stroke-width="1"/><rect x="5" y="7.5" width="5.4" height="5.4" fill="#000"/><rect x="6" y="8.5" width="3.4" height="3.4" fill="#f00"/><rect x="0" y="2.500" width="3" height="3" fill="#000"/><rect x=".900" y="3.400" width="1.200" height="1.200" fill="#ccc"/><rect x="3" y="5.500" width="3" height="3" fill="#000"/><rect x="3.900" y="6.400" width="1.200" height="1.200" fill="#ccc"/><rect x="10.500" y="9.500" width="1.500" height="1.500" fill="#333"/></svg>
<svg class="a" style="left:272px;top:421.8px" width="16" height="16" viewBox="0 0 16 16"><rect x="0" y="5.500" width="16" height="5.500" fill="#000"/><rect x="1" y="6.500" width="3.500" height="3.500" fill="#fff"/><path d="M5 8.250H10M8.500 6.200L10.800 8.250L8.500 10.300" stroke="#fff" stroke-width="1.200" fill="none"/><rect x="11.500" y="6.500" width="3.500" height="3.500" fill="#f00"/></svg>
<svg class="a" style="left:272px;top:438.8px" width="16" height="16" viewBox="0 0 16 16"><path d="M1.500 14.500Q3 5 8 5Q13 5 14.500 14.500" fill="none" stroke="#000" stroke-width="3" stroke-linecap="butt"/><path d="M1.500 14.500Q3 5 8 5Q13 5 14.500 14.500" fill="none" stroke="#fff" stroke-width="1.2" stroke-linecap="butt"/><rect x="2.3" y="1.8" width="2.400" height="2.400" fill="#484848" stroke="#4d94f5" stroke-width="1"/><rect x="11.8" y="1.8" width="2.400" height="2.400" fill="#484848" stroke="#4d94f5" stroke-width="1"/><rect x="0.8999999999999999" y="13.3" width="2.400" height="2.400" fill="#484848" stroke="#4d94f5" stroke-width="1"/><rect x="13.3" y="13.3" width="2.400" height="2.400" fill="#484848" stroke="#4d94f5" stroke-width="1"/></svg>
<svg class="a" style="left:272px;top:455.8px" width="16" height="16" viewBox="0 0 16 16"><path d="M13 2.500Q6 2 5.500 5Q5 7 8 7.500Q11 8.500 8 11Q5 13 2 13.500" fill="none" stroke="#000" stroke-width="3" stroke-linecap="butt"/><path d="M13 2.500Q6 2 5.500 5Q5 7 8 7.500Q11 8.500 8 11Q5 13 2 13.500" fill="none" stroke="#fff" stroke-width="1.2" stroke-linecap="butt"/><rect x="11.8" y="1.1" width="2.400" height="2.400" fill="#484848" stroke="#4d94f5" stroke-width="1"/><rect x="3.8" y="4.3" width="2.400" height="2.400" fill="#484848" stroke="#4d94f5" stroke-width="1"/><rect x="8.8" y="8.3" width="2.400" height="2.400" fill="#484848" stroke="#4d94f5" stroke-width="1"/><rect x="1.3" y="12.3" width="2.400" height="2.400" fill="#484848" stroke="#4d94f5" stroke-width="1"/></svg>
<svg class="a" style="left:272px;top:472.8px" width="16" height="16" viewBox="0 0 16 16"><path d="M1.500 4.500L6.500 1.500L15 7.500L6.500 14L1.500 12.500L7.500 8z" fill="#e8e8e8" stroke="#000" stroke-width="1.400"/><path d="M4 4.500l5 3.500-5 3.500M6 3.500l6 4-6 4.500M8 3l5.500 4.500" fill="none" stroke="#8a8a8a" stroke-width=".900"/><path d="M2 4.500L6.500 2L14.500 7.500" fill="none" stroke="#fff" stroke-width="1"/></svg>
<svg class="a" style="left:272px;top:489.8px" width="16" height="16" viewBox="0 0 16 16"><path d="M1 4L6.500 1L15.500 7.500L6.500 14.500L1 12.500L7 8z" fill="#666" stroke="#000" stroke-width="2.400"/><path d="M1 4L6.500 1L15.500 7.500L6.500 14.500L1 12.500L7 8z" fill="none" stroke="#fff" stroke-width="1"/><path d="M4 5l5 3-5 3.500M9 4.500l4 3-4 3" fill="none" stroke="#ddd" stroke-width=".800"/><path d="M4 2.500L10.500 7.500L2.500 14" fill="none" stroke="#2a2aff" stroke-width="1.100"/></svg>
<svg class="a" style="left:272px;top:506.8px" width="16" height="16" viewBox="0 0 16 16"><path d="M1 1.500H7L9 5.500L15 11V15H9.500V12L3.500 6.500z" fill="#f2f2f2" stroke="#000" stroke-width="1.400"/><path d="M2.500 4h5.500M4.500 6.500h5M7 9h5M9.500 11.500h5" stroke="#aaa" stroke-width=".900"/></svg>
<svg class="a" style="left:272px;top:523.8px" width="16" height="16" viewBox="0 0 16 16"><path d="M2 4H15M1 8H15M1 13H15M4.500 1V14M11.500 1V14" stroke="#fff" stroke-width="1.100"/><path d="M2 6h12M2 10.500h12" stroke="#ddd" stroke-width=".800"/><path d="M2.500 11.500L1 13l1.500 1.500M13.500 11.500L15 13l-1.500 1.500" stroke="#fff" stroke-width="1" fill="none"/><path d="M8 1.500V14.500" stroke="#ff0" stroke-width="1.300"/></svg>
<svg class="a" style="left:272px;top:540.8px" width="16" height="16" viewBox="0 0 16 16"><path d="M1 11L4.500 8.500L6 4L9.500 1.500L14.500 3L12.500 7.500L10 9L9 13L4.500 15L1.500 14z" fill="#f4f4f4" stroke="#000" stroke-width="1.600"/><path d="M4 10.500l3 1M6 8l3 1M7 5.500l3 1M9 3.500l3 1" stroke="#777" stroke-width="1.300"/><path d="M11 2.500l3 1" stroke="#000" stroke-width="1"/></svg>
<div class="a" style="left:273px;top:558px;width:5px;height:2px;background:#000;"></div>
<div class="a" style="left:280px;top:558px;width:7px;height:2px;background:#000;"></div>
<div class="a" style="left:118px;top:1px;width:123px;height:34px;background:transparent;border:3px solid #f4444a"></div>
<div class="a" style="left:167px;top:34px;width:6px;height:73px;background:#f4444a;"></div>
<svg class="a" style="left:161px;top:104px" width="18" height="18"><path d="M1 2h16L9 17z" fill="#f4444a"/></svg>
<svg class="a" style="left:90px;top:122.4px" width="162" height="36"><text x="8" y="24" font-family="Liberation Sans" font-weight="bold" font-size="16" fill="#fa3c42" stroke="#fff" stroke-width="7.400" stroke-linejoin="round" paint-order="stroke fill">Workspace Hidden</text></svg>
<div class="a" style="left:721px;top:232px;width:114px;height:54px;background:transparent;border:2.500px solid #f4444a"></div>
<svg class="a" style="left:832px;top:242px" width="50" height="24"><path d="M42 8.300L14 12.500" stroke="#f4444a" stroke-width="5" stroke-linecap="round"/><path d="M2 12.500L15 5l1 15z" fill="#f4444a"/></svg>
<svg class="a" style="left:879.5px;top:235.3px" width="108" height="36"><text x="8" y="24" font-family="Liberation Sans" font-weight="bold" font-size="16" fill="#fa3c42" stroke="#fff" stroke-width="7.400" stroke-linejoin="round" paint-order="stroke fill">un-checked</text></svg>
</body></html>
